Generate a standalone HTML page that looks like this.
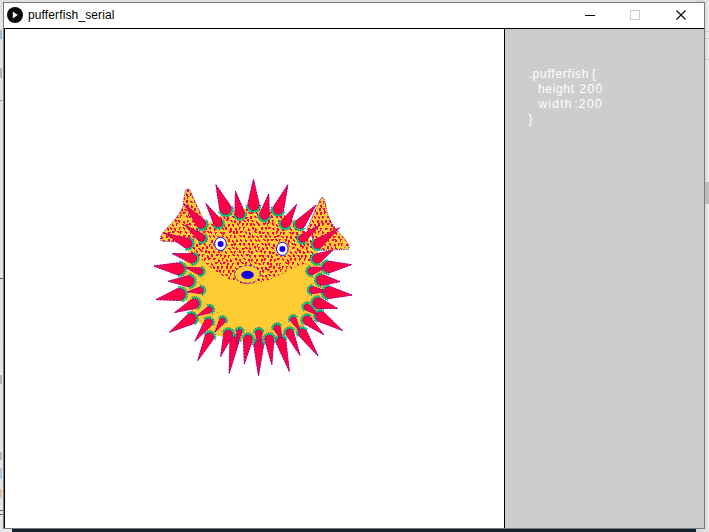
<!DOCTYPE html>
<html><head><meta charset="utf-8"><style>
html,body{margin:0;padding:0;}
body{width:709px;height:532px;overflow:hidden;position:relative;background:#e9e9e9;font-family:"Liberation Sans",sans-serif;}
.a{position:absolute;}
</style></head><body>
<div class="a" style="left:0;top:0;width:697px;height:2px;background:#dfdfdf"></div><div class="a" style="left:697px;top:0;width:12px;height:2px;background:linear-gradient(90deg,#cfcfcf,#ececec)"></div>
<div class="a" style="left:0;top:0;width:3px;height:532px;background:#e3e3e3"></div>
<div class="a" style="left:705px;top:0;width:4px;height:532px;background:linear-gradient(90deg,#d6d6d6,#e4e4e4 50%,#ececec)"></div>
<div class="a" style="left:12px;top:529px;width:684px;height:3px;background:#10202e"></div><div class="a" style="left:696px;top:529px;width:9px;height:3px;background:linear-gradient(90deg,#d2d2d2,#e2e2e2)"></div>
<div class="a" style="left:0;top:30px;width:2px;height:9px;background:#9fb6dc"></div>
<div class="a" style="left:0;top:68px;width:2px;height:10px;background:#b4b4b4"></div>
<div class="a" style="left:0;top:100px;width:2px;height:1px;background:#6d8fc4"></div>
<div class="a" style="left:0;top:278px;width:3px;height:1px;background:#4a5866"></div>
<div class="a" style="left:0;top:345px;width:3px;height:187px;background:#e6e6e6"></div>
<div class="a" style="left:0;top:375px;width:2px;height:9px;background:#b4b4b4"></div>
<div class="a" style="left:0;top:452px;width:2px;height:8px;background:#b4b4b4"></div>
<div class="a" style="left:0;top:468px;width:2px;height:11px;background:#b0c4e4"></div>
<div class="a" style="left:0;top:489px;width:2px;height:9px;background:#dcc4a4"></div>
<div class="a" style="left:0;top:510px;width:3px;height:1px;background:#606060"></div>
<div class="a" style="left:0;top:514px;width:3px;height:1px;background:#606060"></div>
<div class="a" style="left:705px;top:182px;width:4px;height:22px;background:#bdbdbd"></div>
<div class="a" style="left:705px;top:31px;width:4px;height:1px;background:#c4c4c4"></div>
<div class="a" style="left:705px;top:38px;width:4px;height:1px;background:#c4c4c4"></div>
<div class="a" style="left:705px;top:59px;width:4px;height:1px;background:#c4c4c4"></div>
<!-- window -->
<div class="a" style="left:3px;top:2px;width:700px;height:525px;border:1px solid #7a7a7a;background:#fff"></div>
<svg class="a" style="left:0;top:0" width="709" height="532" viewBox="0 0 709 532">
 <circle cx="15" cy="15" r="8" fill="#0a0a0a"/>
 <path d="M12.8,11.6 L17.8,15 L12.8,18.4 Z" fill="#f4f4f4"/>
 <rect x="585" y="15" width="10" height="1" fill="#000"/>
 <rect x="630.5" y="10.5" width="9" height="9" fill="none" stroke="#cccccc" stroke-width="1"/>
 <path d="M676.5,10.5 L685.5,19.5 M685.5,10.5 L676.5,19.5" stroke="#000" stroke-width="1.1"/>
</svg>
<svg class="a" style="left:0;top:0" width="709" height="40"><text x="28" y="18.8" font-size="12" fill="#000" textLength="86.5" lengthAdjust="spacing">pufferfish_serial</text></svg>
<div class="a" style="left:4px;top:28px;width:700px;height:500px;background:#fff"></div>
<div class="a" style="left:505px;top:29px;width:199px;height:499px;background:#cdcdcd"></div>
<div class="a" style="left:4px;top:28px;width:700px;height:1px;background:#000"></div>
<div class="a" style="left:4px;top:28px;width:1px;height:500px;background:#000"></div>
<div class="a" style="left:504px;top:28px;width:1px;height:500px;background:#000"></div>
<div class="a" style="left:704px;top:2px;width:1px;height:527px;background:#7a7a7a"></div>
<div class="a" style="left:3px;top:528px;width:702px;height:1px;background:#7a7a7a"></div>
<svg class="a" style="left:0;top:0" width="709" height="532" font-size="12" fill="#fff">
<text x="528.5" y="77.8" textLength="60" lengthAdjust="spacing">.pufferfish</text>
<text x="591.8" y="77.8">{</text>
<text x="538" y="92.7" textLength="36" lengthAdjust="spacing">height</text>
<text x="579.3" y="92.7" textLength="23" lengthAdjust="spacing">200</text>
<text x="538.4" y="107.5" textLength="33" lengthAdjust="spacing">width</text>
<text x="574.5" y="107.5">:</text>
<text x="578.8" y="107.5" textLength="23" lengthAdjust="spacing">200</text>
<text x="528.5" y="122.5">}</text>
</svg>
<svg class="a" style="left:0;top:0" width="709" height="532" viewBox="0 0 709 532">
<defs><clipPath id="dc"><path d="M150,150 L360,150 L360,244 C330,250 310,262 290,270 C275,278 262,284 248,284 C232,284 215,272 200,258 L150,240 Z"/></clipPath><clipPath id="bc"><path d="M185.8,190.5 C186.8,188.6 189,188.6 190,190.5 C192.5,195 195.5,204 201,214 L205,224 L190,245 L175,241.8 L161.5,241.3 C160,239.5 160.3,236 163,232.5 C171,224 180.5,214 183,206 C184,199 184.5,193 185.8,190.5 Z"/><path d="M322.8,197.5 C325,199 325.8,205 326.7,210 C328.7,219 333,226 339,232.5 C343,237 347,241 349.2,246 L348.7,249.3 L321,250.5 L307,230 C310.5,221 314.5,211 318.5,203.5 C320,200 321,197.5 322.8,197.5 Z"/><circle cx="254" cy="275" r="67"/></clipPath></defs>
<path d="M185.8,190.5 C186.8,188.6 189,188.6 190,190.5 C192.5,195 195.5,204 201,214 L205,224 L190,245 L175,241.8 L161.5,241.3 C160,239.5 160.3,236 163,232.5 C171,224 180.5,214 183,206 C184,199 184.5,193 185.8,190.5 Z" fill="#ffcc33" stroke="#1400e6" stroke-width="0.9" stroke-dasharray="1 1.2"/>
<path d="M322.8,197.5 C325,199 325.8,205 326.7,210 C328.7,219 333,226 339,232.5 C343,237 347,241 349.2,246 L348.7,249.3 L321,250.5 L307,230 C310.5,221 314.5,211 318.5,203.5 C320,200 321,197.5 322.8,197.5 Z" fill="#ffcc33" stroke="#1400e6" stroke-width="0.9" stroke-dasharray="1 1.2"/>
<circle cx="254" cy="275" r="67" fill="#ffcc33"/><path d="M182.4,276.4 L184.1,262.2 L189.0,251.0 L194.0,239.8 L200.1,231.0 L209.2,223.1 L220.8,215.5 L233.8,210.4 L246.8,209.2 L260.3,209.2 L270.7,210.9 L282.8,215.6 L292.6,223.1 L301.9,231.0 L310.1,241.0 L317.3,250.7 L323.3,260.7 L324.7,274.3 L325.3,284.4 L323.7,298.5 L320.0,308.6 L313.1,319.4 L304.3,326.4 L294.9,332.7 L285.2,335.9 L273.6,339.1 L264.3,340.8 L252.5,340.8 L217.2,335.8 L207.1,330.8 L198.3,321.8 L191.3,310.6 L185.8,300.1 L182.7,286.2 Z" fill="#ffcc33"/>
<g clip-path="url(#dc)"><g clip-path="url(#bc)"><path d="M155,184h2v3h-2zM159,185h2v2h-2zM159,187h1v1h-1zM164,186h2v1h-2zM165,187h2v1h-2zM167,185h2v2h-2zM168,187h1v1h-1zM172,185h2v3h-2zM177,184h2v1h-2zM178,185h2v1h-2zM181,185h2v3h-2zM185,185h2v1h-2zM186,186h2v1h-2zM189,186h1v2h-1zM190,187h1v2h-1zM194,185h1v2h-1zM195,186h1v2h-1zM198,185h2v2h-2zM199,187h1v1h-1zM202,185h2v2h-2zM202,187h1v1h-1zM206,185h2v3h-2zM211,185h1v3h-1zM212,185h1v1h-1zM216,185h3v1h-3zM216,186h2v1h-2zM219,185h1v3h-1zM220,186h1v2h-1zM224,185h1v2h-1zM225,186h1v2h-1zM228,186h3v1h-3zM228,187h2v1h-2zM232,186h2v2h-2zM233,188h1v1h-1zM237,184h2v2h-2zM237,186h1v1h-1zM240,185h2v3h-2zM246,184h2v2h-2zM246,186h1v1h-1zM249,185h3v1h-3zM249,186h2v1h-2zM254,185h2v2h-2zM255,187h1v1h-1zM259,185h2v2h-2zM260,187h1v1h-1zM262,185h3v1h-3zM262,186h2v1h-2zM266,185h2v2h-2zM266,187h1v1h-1zM270,185h1v3h-1zM271,186h1v2h-1zM276,185h2v1h-2zM277,186h2v1h-2zM280,184h2v1h-2zM281,185h2v1h-2zM284,186h3v1h-3zM284,187h2v1h-2zM288,185h1v2h-1zM289,186h1v2h-1zM293,186h1v2h-1zM294,187h1v2h-1zM297,186h1v3h-1zM298,186h1v1h-1zM302,184h1v3h-1zM303,185h1v2h-1zM305,185h2v3h-2zM310,185h1v2h-1zM311,186h1v2h-1zM314,184h2v2h-2zM314,186h1v1h-1zM319,185h1v3h-1zM320,186h1v2h-1zM323,185h2v3h-2zM327,186h1v3h-1zM328,186h1v1h-1zM331,185h3v1h-3zM331,186h2v1h-2zM336,184h2v2h-2zM337,186h1v1h-1zM341,185h2v2h-2zM342,187h1v1h-1zM344,184h2v3h-2zM349,185h2v2h-2zM349,187h1v1h-1zM353,184h2v1h-2zM354,185h2v1h-2zM157,188h1v2h-1zM158,189h1v2h-1zM162,189h3v1h-3zM162,190h2v1h-2zM165,189h3v1h-3zM165,190h2v1h-2zM170,189h1v3h-1zM171,190h1v2h-1zM174,189h1v2h-1zM175,190h1v2h-1zM179,189h2v3h-2zM182,190h2v2h-2zM182,192h1v1h-1zM187,189h2v3h-2zM192,189h2v2h-2zM193,191h1v1h-1zM196,188h2v2h-2zM196,190h1v1h-1zM201,189h2v1h-2zM202,190h2v1h-2zM205,189h2v2h-2zM205,191h1v1h-1zM209,189h2v1h-2zM210,190h2v1h-2zM214,189h2v1h-2zM215,190h2v1h-2zM217,189h2v3h-2zM222,189h3v1h-3zM222,190h2v1h-2zM226,189h2v2h-2zM226,191h1v1h-1zM230,190h2v2h-2zM230,192h1v1h-1zM235,189h2v1h-2zM236,190h2v1h-2zM238,189h2v2h-2zM238,191h1v1h-1zM243,189h2v3h-2zM247,189h2v2h-2zM248,191h1v1h-1zM252,188h1v3h-1zM253,188h1v1h-1zM257,189h3v1h-3zM257,190h2v1h-2zM261,189h2v2h-2zM261,191h1v1h-1zM264,190h1v3h-1zM265,190h1v1h-1zM269,189h2v2h-2zM270,191h1v1h-1zM274,188h1v3h-1zM275,189h1v2h-1zM277,189h3v1h-3zM277,190h2v1h-2zM282,188h3v1h-3zM282,189h2v1h-2zM286,189h1v3h-1zM287,190h1v2h-1zM290,189h2v2h-2zM291,191h1v1h-1zM295,190h1v3h-1zM296,190h1v1h-1zM300,188h2v1h-2zM301,189h2v1h-2zM303,188h2v1h-2zM304,189h2v1h-2zM308,189h1v3h-1zM309,189h1v1h-1zM312,188h2v2h-2zM312,190h1v1h-1zM317,189h1v3h-1zM318,189h1v1h-1zM321,189h1v3h-1zM322,190h1v2h-1zM325,189h2v3h-2zM330,189h2v3h-2zM334,188h1v3h-1zM335,189h1v2h-1zM338,189h2v3h-2zM342,189h3v1h-3zM342,190h2v1h-2zM347,188h2v3h-2zM350,189h2v2h-2zM351,191h1v1h-1zM355,189h2v2h-2zM356,191h1v1h-1zM155,193h2v1h-2zM156,194h2v1h-2zM160,193h3v1h-3zM160,194h2v1h-2zM164,192h1v2h-1zM165,193h1v2h-1zM169,193h2v1h-2zM170,194h2v1h-2zM173,192h2v2h-2zM174,194h1v1h-1zM176,192h2v1h-2zM177,193h2v1h-2zM181,192h1v2h-1zM182,193h1v2h-1zM186,193h1v3h-1zM187,194h1v2h-1zM190,193h2v2h-2zM190,195h1v1h-1zM193,193h3v1h-3zM193,194h2v1h-2zM198,193h1v3h-1zM199,193h1v1h-1zM203,192h2v1h-2zM204,193h2v1h-2zM206,193h1v3h-1zM207,193h1v1h-1zM211,192h2v2h-2zM211,194h1v1h-1zM215,193h2v2h-2zM215,195h1v1h-1zM220,193h2v3h-2zM224,193h1v2h-1zM225,194h1v2h-1zM228,192h2v1h-2zM229,193h2v1h-2zM233,192h1v2h-1zM234,193h1v2h-1zM236,193h1v3h-1zM237,194h1v2h-1zM241,192h1v3h-1zM242,192h1v1h-1zM246,193h1v2h-1zM247,194h1v2h-1zM249,193h3v1h-3zM249,194h2v1h-2zM254,192h2v3h-2zM259,192h2v2h-2zM260,194h1v1h-1zM262,192h2v2h-2zM263,194h1v1h-1zM267,192h2v1h-2zM268,193h2v1h-2zM270,193h3v1h-3zM270,194h2v1h-2zM275,194h1v3h-1zM276,194h1v1h-1zM280,192h1v3h-1zM281,193h1v2h-1zM283,193h2v2h-2zM284,195h1v1h-1zM289,192h1v3h-1zM290,193h1v2h-1zM292,192h1v2h-1zM293,193h1v2h-1zM297,192h3v1h-3zM297,193h2v1h-2zM301,192h2v2h-2zM301,194h1v1h-1zM306,194h2v3h-2zM309,193h2v1h-2zM310,194h2v1h-2zM314,192h3v1h-3zM314,193h2v1h-2zM318,193h1v3h-1zM319,193h1v1h-1zM323,193h1v3h-1zM324,193h1v1h-1zM328,192h2v1h-2zM329,193h2v1h-2zM332,192h1v3h-1zM333,193h1v2h-1zM335,192h2v3h-2zM340,192h1v2h-1zM341,193h1v2h-1zM344,192h1v3h-1zM345,192h1v1h-1zM349,193h1v2h-1zM350,194h1v2h-1zM353,193h2v3h-2zM157,196h3v1h-3zM157,197h2v1h-2zM161,196h2v2h-2zM161,198h1v1h-1zM167,197h2v1h-2zM168,198h2v1h-2zM169,197h2v1h-2zM170,198h2v1h-2zM174,196h1v3h-1zM175,196h1v1h-1zM178,196h2v1h-2zM179,197h2v1h-2zM183,197h2v2h-2zM184,199h1v1h-1zM187,196h1v3h-1zM188,196h1v1h-1zM192,196h1v2h-1zM193,197h1v2h-1zM196,196h1v3h-1zM197,197h1v2h-1zM200,197h1v3h-1zM201,197h1v1h-1zM205,197h3v1h-3zM205,198h2v1h-2zM208,197h1v3h-1zM209,198h1v2h-1zM212,197h1v3h-1zM213,197h1v1h-1zM218,197h1v3h-1zM219,198h1v2h-1zM222,197h2v3h-2zM226,197h2v1h-2zM227,198h2v1h-2zM230,196h2v2h-2zM230,198h1v1h-1zM235,196h3v1h-3zM235,197h2v1h-2zM239,197h2v1h-2zM240,198h2v1h-2zM243,196h2v2h-2zM244,198h1v1h-1zM248,197h2v2h-2zM249,199h1v1h-1zM252,196h3v1h-3zM252,197h2v1h-2zM256,196h1v2h-1zM257,197h1v2h-1zM260,197h2v1h-2zM261,198h2v1h-2zM265,197h3v1h-3zM265,198h2v1h-2zM270,196h1v2h-1zM271,197h1v2h-1zM274,197h2v1h-2zM275,198h2v1h-2zM277,196h1v2h-1zM278,197h1v2h-1zM282,197h1v3h-1zM283,198h1v2h-1zM285,196h1v2h-1zM286,197h1v2h-1zM291,196h2v1h-2zM292,197h2v1h-2zM295,196h1v2h-1zM296,197h1v2h-1zM299,197h2v2h-2zM300,199h1v1h-1zM304,197h1v2h-1zM305,198h1v2h-1zM308,197h2v3h-2zM312,196h3v1h-3zM312,197h2v1h-2zM317,196h2v1h-2zM318,197h2v1h-2zM320,196h1v2h-1zM321,197h1v2h-1zM326,196h1v2h-1zM327,197h1v2h-1zM330,197h2v1h-2zM331,198h2v1h-2zM333,197h1v3h-1zM334,197h1v1h-1zM337,196h3v1h-3zM337,197h2v1h-2zM342,196h1v3h-1zM343,197h1v2h-1zM346,196h2v2h-2zM347,198h1v1h-1zM351,196h2v2h-2zM351,198h1v1h-1zM355,196h2v1h-2zM356,197h2v1h-2zM155,201h1v2h-1zM156,202h1v2h-1zM159,200h1v3h-1zM160,200h1v1h-1zM164,201h2v2h-2zM164,203h1v1h-1zM169,201h2v3h-2zM172,200h1v2h-1zM173,201h1v2h-1zM177,200h1v2h-1zM178,201h1v2h-1zM181,200h2v2h-2zM181,202h1v1h-1zM186,200h2v3h-2zM190,201h2v1h-2zM191,202h2v1h-2zM194,200h1v3h-1zM195,200h1v1h-1zM198,201h1v2h-1zM199,202h1v2h-1zM202,201h1v3h-1zM203,202h1v2h-1zM206,200h1v2h-1zM207,201h1v2h-1zM211,201h1v2h-1zM212,202h1v2h-1zM215,200h3v1h-3zM215,201h2v1h-2zM220,200h1v3h-1zM221,201h1v2h-1zM224,200h3v1h-3zM224,201h2v1h-2zM228,200h2v2h-2zM228,202h1v1h-1zM233,200h1v3h-1zM234,201h1v2h-1zM237,200h1v3h-1zM238,201h1v2h-1zM241,200h2v1h-2zM242,201h2v1h-2zM245,201h2v1h-2zM246,202h2v1h-2zM250,201h1v3h-1zM251,201h1v1h-1zM254,201h2v1h-2zM255,202h2v1h-2zM258,200h2v3h-2zM262,201h2v2h-2zM262,203h1v1h-1zM266,200h2v1h-2zM267,201h2v1h-2zM270,201h1v3h-1zM271,201h1v1h-1zM275,200h1v2h-1zM276,201h1v2h-1zM280,201h2v3h-2zM283,200h3v1h-3zM283,201h2v1h-2zM289,200h2v2h-2zM290,202h1v1h-1zM292,201h3v1h-3zM292,202h2v1h-2zM298,200h2v2h-2zM299,202h1v1h-1zM301,200h2v2h-2zM302,202h1v1h-1zM306,201h3v1h-3zM306,202h2v1h-2zM309,201h2v3h-2zM315,200h2v3h-2zM319,200h1v3h-1zM320,201h1v2h-1zM323,201h1v3h-1zM324,201h1v1h-1zM327,200h2v2h-2zM328,202h1v1h-1zM331,201h2v1h-2zM332,202h2v1h-2zM335,200h2v3h-2zM339,200h3v1h-3zM339,201h2v1h-2zM344,200h2v1h-2zM345,201h2v1h-2zM348,200h2v1h-2zM349,201h2v1h-2zM352,200h1v2h-1zM353,201h1v2h-1zM156,204h1v3h-1zM157,204h1v1h-1zM161,204h1v3h-1zM162,204h1v1h-1zM166,204h2v3h-2zM170,205h2v2h-2zM170,207h1v1h-1zM175,204h1v2h-1zM176,205h1v2h-1zM179,204h2v1h-2zM180,205h2v1h-2zM183,204h2v1h-2zM184,205h2v1h-2zM187,204h1v2h-1zM188,205h1v2h-1zM191,205h1v3h-1zM192,206h1v2h-1zM196,204h2v3h-2zM201,204h1v3h-1zM202,204h1v1h-1zM204,204h1v3h-1zM205,205h1v2h-1zM209,205h1v3h-1zM210,206h1v2h-1zM213,205h2v2h-2zM213,207h1v1h-1zM218,205h1v3h-1zM219,206h1v2h-1zM221,204h3v1h-3zM221,205h2v1h-2zM225,205h1v3h-1zM226,205h1v1h-1zM231,205h3v1h-3zM231,206h2v1h-2zM234,204h1v2h-1zM235,205h1v2h-1zM238,204h2v2h-2zM239,206h1v1h-1zM243,205h1v3h-1zM244,205h1v1h-1zM247,205h1v3h-1zM248,205h1v1h-1zM251,205h2v1h-2zM252,206h2v1h-2zM256,205h2v1h-2zM257,206h2v1h-2zM260,205h3v1h-3zM260,206h2v1h-2zM264,204h1v3h-1zM265,204h1v1h-1zM268,204h2v2h-2zM269,206h1v1h-1zM274,204h2v1h-2zM275,205h2v1h-2zM278,205h2v2h-2zM278,207h1v1h-1zM282,204h2v3h-2zM286,205h2v2h-2zM286,207h1v1h-1zM291,204h2v2h-2zM292,206h1v1h-1zM294,204h3v1h-3zM294,205h2v1h-2zM299,204h1v3h-1zM300,204h1v1h-1zM304,205h3v1h-3zM304,206h2v1h-2zM307,204h2v3h-2zM312,205h1v3h-1zM313,206h1v2h-1zM316,204h2v2h-2zM316,206h1v1h-1zM320,205h2v2h-2zM321,207h1v1h-1zM325,204h1v3h-1zM326,205h1v2h-1zM329,204h2v3h-2zM333,204h1v3h-1zM334,205h1v2h-1zM339,205h2v2h-2zM340,207h1v1h-1zM342,204h2v2h-2zM343,206h1v1h-1zM346,205h3v1h-3zM346,206h2v1h-2zM350,204h3v1h-3zM350,205h2v1h-2zM355,205h2v2h-2zM356,207h1v1h-1zM155,208h1v2h-1zM156,209h1v2h-1zM159,208h1v2h-1zM160,209h1v2h-1zM163,208h2v1h-2zM164,209h2v1h-2zM167,208h2v1h-2zM168,209h2v1h-2zM172,208h2v1h-2zM173,209h2v1h-2zM177,208h2v2h-2zM178,210h1v1h-1zM181,209h2v2h-2zM182,211h1v1h-1zM184,209h2v1h-2zM185,210h2v1h-2zM190,209h2v3h-2zM194,208h2v3h-2zM198,209h2v1h-2zM199,210h2v1h-2zM203,208h1v3h-1zM204,209h1v2h-1zM207,208h2v3h-2zM210,208h2v2h-2zM210,210h1v1h-1zM215,208h1v3h-1zM216,209h1v2h-1zM219,209h2v3h-2zM224,208h2v1h-2zM225,209h2v1h-2zM229,209h1v3h-1zM230,209h1v1h-1zM233,208h1v2h-1zM234,209h1v2h-1zM236,207h3v1h-3zM236,208h2v1h-2zM241,208h2v2h-2zM242,210h1v1h-1zM246,208h1v3h-1zM247,209h1v2h-1zM250,208h1v3h-1zM251,209h1v2h-1zM254,208h1v2h-1zM255,209h1v2h-1zM258,208h2v3h-2zM262,208h2v2h-2zM262,210h1v1h-1zM267,207h2v2h-2zM267,209h1v1h-1zM271,208h1v3h-1zM272,208h1v1h-1zM275,207h1v3h-1zM276,208h1v2h-1zM280,209h1v3h-1zM281,209h1v1h-1zM284,208h1v3h-1zM285,209h1v2h-1zM288,208h1v3h-1zM289,209h1v2h-1zM293,209h2v2h-2zM294,211h1v1h-1zM297,209h1v3h-1zM298,210h1v2h-1zM301,208h1v3h-1zM302,209h1v2h-1zM306,208h3v1h-3zM306,209h2v1h-2zM310,209h2v1h-2zM311,210h2v1h-2zM314,209h2v3h-2zM319,208h2v3h-2zM323,208h2v2h-2zM324,210h1v1h-1zM328,208h1v3h-1zM329,209h1v2h-1zM332,209h1v3h-1zM333,209h1v1h-1zM336,208h3v1h-3zM336,209h2v1h-2zM339,208h1v3h-1zM340,208h1v1h-1zM345,208h2v2h-2zM345,210h1v1h-1zM348,208h2v1h-2zM349,209h2v1h-2zM352,208h2v3h-2zM157,212h1v3h-1zM158,212h1v1h-1zM162,212h1v2h-1zM163,213h1v2h-1zM166,212h2v1h-2zM167,213h2v1h-2zM170,212h3v1h-3zM170,213h2v1h-2zM174,212h2v3h-2zM179,212h2v1h-2zM180,213h2v1h-2zM183,212h3v1h-3zM183,213h2v1h-2zM188,213h1v3h-1zM189,213h1v1h-1zM191,211h1v3h-1zM192,211h1v1h-1zM196,213h2v3h-2zM199,211h2v2h-2zM199,213h1v1h-1zM205,212h2v3h-2zM209,213h1v3h-1zM210,214h1v2h-1zM212,211h2v2h-2zM213,213h1v1h-1zM217,213h3v1h-3zM217,214h2v1h-2zM221,213h1v3h-1zM222,214h1v2h-1zM226,212h2v1h-2zM227,213h2v1h-2zM230,212h1v2h-1zM231,213h1v2h-1zM234,213h1v2h-1zM235,214h1v2h-1zM239,212h1v2h-1zM240,213h1v2h-1zM243,213h2v1h-2zM244,214h2v1h-2zM248,212h2v1h-2zM249,213h2v1h-2zM251,211h1v3h-1zM252,212h1v2h-1zM256,212h1v2h-1zM257,213h1v2h-1zM261,213h1v3h-1zM262,214h1v2h-1zM265,212h2v3h-2zM269,212h3v1h-3zM269,213h2v1h-2zM273,212h2v2h-2zM274,214h1v1h-1zM277,212h1v3h-1zM278,212h1v1h-1zM282,212h1v3h-1zM283,212h1v1h-1zM287,212h2v2h-2zM287,214h1v1h-1zM290,211h2v1h-2zM291,212h2v1h-2zM294,212h2v3h-2zM299,212h1v2h-1zM300,213h1v2h-1zM304,213h2v2h-2zM304,215h1v1h-1zM308,212h2v1h-2zM309,213h2v1h-2zM311,212h1v3h-1zM312,212h1v1h-1zM316,212h2v3h-2zM320,212h2v3h-2zM324,211h2v2h-2zM324,213h1v1h-1zM329,212h2v1h-2zM330,213h2v1h-2zM333,212h1v3h-1zM334,213h1v2h-1zM337,212h3v1h-3zM337,213h2v1h-2zM342,211h2v1h-2zM343,212h2v1h-2zM347,212h2v2h-2zM348,214h1v1h-1zM351,213h1v2h-1zM352,214h1v2h-1zM355,212h2v3h-2zM154,216h2v2h-2zM154,218h1v1h-1zM159,216h3v1h-3zM159,217h2v1h-2zM163,217h2v3h-2zM167,215h1v3h-1zM168,216h1v2h-1zM172,215h2v2h-2zM173,217h1v1h-1zM176,216h2v1h-2zM177,217h2v1h-2zM180,215h1v3h-1zM181,215h1v1h-1zM186,215h1v2h-1zM187,216h1v2h-1zM189,216h3v1h-3zM189,217h2v1h-2zM194,215h1v3h-1zM195,215h1v1h-1zM198,216h3v1h-3zM198,217h2v1h-2zM202,217h1v2h-1zM203,218h1v2h-1zM206,215h2v2h-2zM206,217h1v1h-1zM212,217h1v2h-1zM213,218h1v2h-1zM216,216h1v3h-1zM217,216h1v1h-1zM220,217h1v2h-1zM221,218h1v2h-1zM223,217h2v1h-2zM224,218h2v1h-2zM227,216h1v3h-1zM228,217h1v2h-1zM232,216h2v1h-2zM233,217h2v1h-2zM237,216h2v2h-2zM237,218h1v1h-1zM241,216h2v1h-2zM242,217h2v1h-2zM245,217h3v1h-3zM245,218h2v1h-2zM250,216h2v3h-2zM254,216h2v1h-2zM255,217h2v1h-2zM258,216h2v1h-2zM259,217h2v1h-2zM262,216h1v3h-1zM263,217h1v2h-1zM266,215h2v2h-2zM267,217h1v1h-1zM271,215h1v3h-1zM272,216h1v2h-1zM276,215h1v3h-1zM277,216h1v2h-1zM280,216h2v2h-2zM281,218h1v1h-1zM284,215h2v2h-2zM284,217h1v1h-1zM288,217h2v2h-2zM289,219h1v1h-1zM293,216h1v3h-1zM294,216h1v1h-1zM296,215h2v2h-2zM297,217h1v1h-1zM300,217h2v2h-2zM301,219h1v1h-1zM306,216h1v2h-1zM307,217h1v2h-1zM310,215h2v1h-2zM311,216h2v1h-2zM314,216h1v2h-1zM315,217h1v2h-1zM318,216h1v2h-1zM319,217h1v2h-1zM322,216h2v2h-2zM322,218h1v1h-1zM327,216h3v1h-3zM327,217h2v1h-2zM332,216h2v3h-2zM336,215h2v2h-2zM337,217h1v1h-1zM340,216h2v1h-2zM341,217h2v1h-2zM345,216h1v2h-1zM346,217h1v2h-1zM348,215h2v1h-2zM349,216h2v1h-2zM352,216h2v3h-2zM156,220h3v1h-3zM156,221h2v1h-2zM162,220h3v1h-3zM162,221h2v1h-2zM166,221h1v2h-1zM167,222h1v2h-1zM170,219h2v1h-2zM171,220h2v1h-2zM175,219h1v3h-1zM176,220h1v2h-1zM178,220h2v2h-2zM179,222h1v1h-1zM183,221h2v2h-2zM184,223h1v1h-1zM187,220h1v3h-1zM188,220h1v1h-1zM192,220h2v2h-2zM193,222h1v1h-1zM196,220h2v2h-2zM196,222h1v1h-1zM200,219h1v3h-1zM201,220h1v2h-1zM204,220h2v1h-2zM205,221h2v1h-2zM209,219h2v3h-2zM213,220h1v3h-1zM214,221h1v2h-1zM218,220h2v2h-2zM218,222h1v1h-1zM221,220h1v2h-1zM222,221h1v2h-1zM226,219h3v1h-3zM226,220h2v1h-2zM230,220h2v1h-2zM231,221h2v1h-2zM234,220h1v3h-1zM235,221h1v2h-1zM239,221h2v2h-2zM239,223h1v1h-1zM243,220h2v1h-2zM244,221h2v1h-2zM247,219h2v2h-2zM248,221h1v1h-1zM251,220h2v1h-2zM252,221h2v1h-2zM256,221h1v2h-1zM257,222h1v2h-1zM261,220h2v1h-2zM262,221h2v1h-2zM264,220h1v2h-1zM265,221h1v2h-1zM268,220h2v3h-2zM272,220h1v3h-1zM273,220h1v1h-1zM278,220h1v2h-1zM279,221h1v2h-1zM282,219h1v3h-1zM283,219h1v1h-1zM285,219h1v3h-1zM286,219h1v1h-1zM291,220h1v3h-1zM292,220h1v1h-1zM295,220h2v1h-2zM296,221h2v1h-2zM299,220h3v1h-3zM299,221h2v1h-2zM303,219h2v2h-2zM304,221h1v1h-1zM308,219h1v3h-1zM309,219h1v1h-1zM312,220h1v2h-1zM313,221h1v2h-1zM317,220h2v3h-2zM321,220h1v3h-1zM322,221h1v2h-1zM325,220h2v3h-2zM329,220h2v2h-2zM330,222h1v1h-1zM333,220h1v3h-1zM334,221h1v2h-1zM338,221h2v1h-2zM339,222h2v1h-2zM342,219h3v1h-3zM342,220h2v1h-2zM346,220h2v3h-2zM351,220h2v2h-2zM351,222h1v1h-1zM355,221h2v1h-2zM356,222h2v1h-2zM156,223h2v2h-2zM157,225h1v1h-1zM160,224h2v3h-2zM163,224h2v3h-2zM167,224h1v3h-1zM168,224h1v1h-1zM172,224h1v2h-1zM173,225h1v2h-1zM176,223h1v3h-1zM177,223h1v1h-1zM182,224h2v1h-2zM183,225h2v1h-2zM186,224h3v1h-3zM186,225h2v1h-2zM189,223h2v2h-2zM190,225h1v1h-1zM194,224h3v1h-3zM194,225h2v1h-2zM198,224h1v3h-1zM199,225h1v2h-1zM202,224h1v3h-1zM203,224h1v1h-1zM207,223h1v3h-1zM208,224h1v2h-1zM211,224h2v1h-2zM212,225h2v1h-2zM215,224h1v2h-1zM216,225h1v2h-1zM220,224h3v1h-3zM220,225h2v1h-2zM223,224h1v2h-1zM224,225h1v2h-1zM228,224h2v2h-2zM228,226h1v1h-1zM232,224h2v2h-2zM233,226h1v1h-1zM237,223h1v2h-1zM238,224h1v2h-1zM242,223h2v2h-2zM242,225h1v1h-1zM246,223h2v2h-2zM246,225h1v1h-1zM250,223h2v3h-2zM253,223h1v2h-1zM254,224h1v2h-1zM258,223h1v3h-1zM259,224h1v2h-1zM263,223h3v1h-3zM263,224h2v1h-2zM267,223h1v3h-1zM268,223h1v1h-1zM272,223h2v2h-2zM273,225h1v1h-1zM276,224h1v2h-1zM277,225h1v2h-1zM279,224h2v2h-2zM280,226h1v1h-1zM284,224h2v2h-2zM285,226h1v1h-1zM288,223h2v1h-2zM289,224h2v1h-2zM293,224h2v3h-2zM297,224h3v1h-3zM297,225h2v1h-2zM301,223h2v3h-2zM305,223h3v1h-3zM305,224h2v1h-2zM310,224h2v2h-2zM310,226h1v1h-1zM314,224h2v2h-2zM315,226h1v1h-1zM318,223h2v3h-2zM322,223h2v2h-2zM322,225h1v1h-1zM327,223h3v1h-3zM327,224h2v1h-2zM331,224h2v3h-2zM335,224h1v3h-1zM336,225h1v2h-1zM340,224h2v2h-2zM340,226h1v1h-1zM344,224h2v1h-2zM345,225h2v1h-2zM348,223h1v2h-1zM349,224h1v2h-1zM353,224h1v2h-1zM354,225h1v2h-1zM157,228h2v2h-2zM157,230h1v1h-1zM161,227h2v2h-2zM161,229h1v1h-1zM167,228h2v2h-2zM168,230h1v1h-1zM170,227h1v2h-1zM171,228h1v2h-1zM174,228h2v2h-2zM175,230h1v1h-1zM179,227h1v3h-1zM180,227h1v1h-1zM183,227h1v2h-1zM184,228h1v2h-1zM187,227h3v1h-3zM187,228h2v1h-2zM192,228h1v3h-1zM193,228h1v1h-1zM196,228h2v2h-2zM197,230h1v1h-1zM200,228h3v1h-3zM200,229h2v1h-2zM205,227h1v3h-1zM206,228h1v2h-1zM209,227h2v2h-2zM210,229h1v1h-1zM214,228h2v2h-2zM214,230h1v1h-1zM218,227h1v2h-1zM219,228h1v2h-1zM222,227h1v2h-1zM223,228h1v2h-1zM225,227h2v3h-2zM230,228h2v3h-2zM235,228h2v2h-2zM236,230h1v1h-1zM239,227h1v3h-1zM240,227h1v1h-1zM243,227h1v3h-1zM244,227h1v1h-1zM248,228h1v3h-1zM249,229h1v2h-1zM252,227h2v2h-2zM253,229h1v1h-1zM255,228h1v3h-1zM256,229h1v2h-1zM261,227h2v3h-2zM265,227h2v2h-2zM266,229h1v1h-1zM268,227h3v1h-3zM268,228h2v1h-2zM272,228h2v1h-2zM273,229h2v1h-2zM277,228h2v3h-2zM282,228h1v3h-1zM283,229h1v2h-1zM287,227h3v1h-3zM287,228h2v1h-2zM290,228h1v2h-1zM291,229h1v2h-1zM295,227h2v3h-2zM298,227h2v2h-2zM299,229h1v1h-1zM303,227h1v3h-1zM304,228h1v2h-1zM308,228h2v3h-2zM312,228h3v1h-3zM312,229h2v1h-2zM316,227h2v2h-2zM317,229h1v1h-1zM320,228h1v3h-1zM321,228h1v1h-1zM325,228h3v1h-3zM325,229h2v1h-2zM330,228h2v2h-2zM330,230h1v1h-1zM333,227h2v2h-2zM333,229h1v1h-1zM338,228h2v3h-2zM343,228h1v2h-1zM344,229h1v2h-1zM346,228h2v1h-2zM347,229h2v1h-2zM350,228h2v1h-2zM351,229h2v1h-2zM355,227h2v3h-2zM155,231h1v3h-1zM156,232h1v2h-1zM159,232h2v3h-2zM163,231h1v3h-1zM164,232h1v2h-1zM168,232h3v1h-3zM168,233h2v1h-2zM172,231h3v1h-3zM172,232h2v1h-2zM177,231h2v1h-2zM178,232h2v1h-2zM180,231h1v3h-1zM181,231h1v1h-1zM185,231h1v2h-1zM186,232h1v2h-1zM190,231h1v3h-1zM191,231h1v1h-1zM194,231h2v2h-2zM194,233h1v1h-1zM198,231h1v2h-1zM199,232h1v2h-1zM203,231h3v1h-3zM203,232h2v1h-2zM207,231h2v1h-2zM208,232h2v1h-2zM210,231h1v2h-1zM211,232h1v2h-1zM215,232h1v3h-1zM216,232h1v1h-1zM220,232h2v1h-2zM221,233h2v1h-2zM223,232h2v2h-2zM223,234h1v1h-1zM229,231h3v1h-3zM229,232h2v1h-2zM233,231h2v3h-2zM236,231h2v3h-2zM240,231h3v1h-3zM240,232h2v1h-2zM245,231h1v2h-1zM246,232h1v2h-1zM249,232h1v3h-1zM250,233h1v2h-1zM254,231h2v1h-2zM255,232h2v1h-2zM259,231h2v3h-2zM262,232h3v1h-3zM262,233h2v1h-2zM267,232h2v2h-2zM268,234h1v1h-1zM272,232h2v2h-2zM273,234h1v1h-1zM276,231h2v2h-2zM276,233h1v1h-1zM280,232h1v3h-1zM281,232h1v1h-1zM283,232h2v2h-2zM283,234h1v1h-1zM289,232h2v1h-2zM290,233h2v1h-2zM292,232h2v2h-2zM292,234h1v1h-1zM296,232h2v3h-2zM302,231h3v1h-3zM302,232h2v1h-2zM305,231h2v3h-2zM311,232h1v2h-1zM312,233h1v2h-1zM314,231h2v2h-2zM315,233h1v1h-1zM318,231h1v3h-1zM319,231h1v1h-1zM322,231h1v3h-1zM323,232h1v2h-1zM327,232h2v3h-2zM331,232h2v3h-2zM335,232h2v2h-2zM336,234h1v1h-1zM341,232h1v3h-1zM342,233h1v2h-1zM345,232h1v3h-1zM346,232h1v1h-1zM349,232h3v1h-3zM349,233h2v1h-2zM354,231h2v1h-2zM355,232h2v1h-2zM157,236h1v3h-1zM158,237h1v2h-1zM161,236h1v3h-1zM162,237h1v2h-1zM166,235h1v3h-1zM167,236h1v2h-1zM170,235h1v3h-1zM171,235h1v1h-1zM174,235h1v2h-1zM175,236h1v2h-1zM179,235h1v3h-1zM180,236h1v2h-1zM183,235h3v1h-3zM183,236h2v1h-2zM188,235h2v3h-2zM192,236h2v1h-2zM193,237h2v1h-2zM196,236h2v2h-2zM197,238h1v1h-1zM200,235h2v2h-2zM200,237h1v1h-1zM204,235h2v1h-2zM205,236h2v1h-2zM209,235h1v2h-1zM210,236h1v2h-1zM213,235h1v2h-1zM214,236h1v2h-1zM217,236h3v1h-3zM217,237h2v1h-2zM222,235h1v3h-1zM223,236h1v2h-1zM226,236h1v2h-1zM227,237h1v2h-1zM230,235h1v3h-1zM231,235h1v1h-1zM234,235h1v3h-1zM235,236h1v2h-1zM239,235h2v1h-2zM240,236h2v1h-2zM243,235h2v2h-2zM244,237h1v1h-1zM248,236h3v1h-3zM248,237h2v1h-2zM252,235h1v3h-1zM253,236h1v2h-1zM256,236h2v1h-2zM257,237h2v1h-2zM260,235h2v2h-2zM261,237h1v1h-1zM265,235h2v3h-2zM269,235h1v2h-1zM270,236h1v2h-1zM274,236h3v1h-3zM274,237h2v1h-2zM277,235h3v1h-3zM277,236h2v1h-2zM281,236h2v1h-2zM282,237h2v1h-2zM286,236h2v2h-2zM286,238h1v1h-1zM290,236h2v3h-2zM295,236h2v2h-2zM296,238h1v1h-1zM298,236h2v2h-2zM298,238h1v1h-1zM304,236h2v3h-2zM307,235h3v1h-3zM307,236h2v1h-2zM312,235h1v3h-1zM313,236h1v2h-1zM315,236h2v1h-2zM316,237h2v1h-2zM321,235h1v2h-1zM322,236h1v2h-1zM324,236h2v3h-2zM328,236h2v1h-2zM329,237h2v1h-2zM333,236h3v1h-3zM333,237h2v1h-2zM338,236h2v2h-2zM339,238h1v1h-1zM342,235h1v3h-1zM343,236h1v2h-1zM346,235h3v1h-3zM346,236h2v1h-2zM351,236h2v2h-2zM352,238h1v1h-1zM354,235h1v3h-1zM355,236h1v2h-1zM155,239h2v1h-2zM156,240h2v1h-2zM159,239h1v3h-1zM160,239h1v1h-1zM163,240h1v3h-1zM164,240h1v1h-1zM168,239h2v3h-2zM172,240h2v2h-2zM172,242h1v1h-1zM176,239h2v2h-2zM176,241h1v1h-1zM181,240h2v2h-2zM181,242h1v1h-1zM186,240h2v3h-2zM189,239h2v2h-2zM189,241h1v1h-1zM193,239h2v3h-2zM198,239h2v2h-2zM199,241h1v1h-1zM202,239h2v3h-2zM206,239h1v3h-1zM207,239h1v1h-1zM211,240h2v3h-2zM216,240h2v3h-2zM219,239h1v2h-1zM220,240h1v2h-1zM224,239h2v3h-2zM228,239h2v3h-2zM232,240h1v2h-1zM233,241h1v2h-1zM236,239h1v3h-1zM237,240h1v2h-1zM240,239h1v2h-1zM241,240h1v2h-1zM245,239h1v3h-1zM246,240h1v2h-1zM250,239h1v2h-1zM251,240h1v2h-1zM255,239h1v2h-1zM256,240h1v2h-1zM258,239h1v2h-1zM259,240h1v2h-1zM263,239h2v1h-2zM264,240h2v1h-2zM267,239h2v2h-2zM267,241h1v1h-1zM271,239h3v1h-3zM271,240h2v1h-2zM275,239h2v1h-2zM276,240h2v1h-2zM279,239h1v3h-1zM280,239h1v1h-1zM285,239h2v2h-2zM285,241h1v1h-1zM288,240h2v2h-2zM288,242h1v1h-1zM293,239h1v2h-1zM294,240h1v2h-1zM298,239h2v3h-2zM302,239h2v2h-2zM303,241h1v1h-1zM306,239h2v3h-2zM310,240h2v2h-2zM310,242h1v1h-1zM314,239h2v1h-2zM315,240h2v1h-2zM319,239h1v3h-1zM320,240h1v2h-1zM323,239h1v3h-1zM324,240h1v2h-1zM327,239h1v2h-1zM328,240h1v2h-1zM332,239h3v1h-3zM332,240h2v1h-2zM335,239h1v3h-1zM336,240h1v2h-1zM340,239h1v3h-1zM341,239h1v1h-1zM345,239h3v1h-3zM345,240h2v1h-2zM348,240h1v3h-1zM349,241h1v2h-1zM353,240h2v2h-2zM354,242h1v1h-1zM157,243h3v1h-3zM157,244h2v1h-2zM161,243h2v2h-2zM161,245h1v1h-1zM166,243h1v3h-1zM167,243h1v1h-1zM170,242h3v1h-3zM170,243h2v1h-2zM174,243h1v2h-1zM175,244h1v2h-1zM179,243h1v3h-1zM180,243h1v1h-1zM183,242h2v2h-2zM183,244h1v1h-1zM187,244h2v1h-2zM188,245h2v1h-2zM192,243h1v3h-1zM193,243h1v1h-1zM196,244h2v3h-2zM199,243h3v1h-3zM199,244h2v1h-2zM204,243h1v2h-1zM205,244h1v2h-1zM209,244h1v3h-1zM210,244h1v1h-1zM213,243h2v2h-2zM213,245h1v1h-1zM217,242h2v2h-2zM218,244h1v1h-1zM222,242h2v2h-2zM222,244h1v1h-1zM226,243h1v3h-1zM227,244h1v2h-1zM231,244h3v1h-3zM231,245h2v1h-2zM234,243h2v2h-2zM234,245h1v1h-1zM239,243h2v2h-2zM240,245h1v1h-1zM243,243h2v2h-2zM244,245h1v1h-1zM248,243h2v2h-2zM249,245h1v1h-1zM252,243h2v2h-2zM252,245h1v1h-1zM257,244h1v3h-1zM258,244h1v1h-1zM261,243h2v1h-2zM262,244h2v1h-2zM265,243h1v3h-1zM266,244h1v2h-1zM268,243h2v2h-2zM269,245h1v1h-1zM273,244h2v3h-2zM278,242h2v3h-2zM282,243h2v3h-2zM287,243h2v2h-2zM288,245h1v1h-1zM291,243h2v1h-2zM292,244h2v1h-2zM294,243h1v2h-1zM295,244h1v2h-1zM300,244h1v3h-1zM301,245h1v2h-1zM303,243h2v2h-2zM304,245h1v1h-1zM307,243h2v2h-2zM308,245h1v1h-1zM311,242h3v1h-3zM311,243h2v1h-2zM317,243h2v3h-2zM321,243h2v2h-2zM321,245h1v1h-1zM324,243h1v2h-1zM325,244h1v2h-1zM329,243h2v2h-2zM330,245h1v1h-1zM334,244h2v2h-2zM335,246h1v1h-1zM338,243h1v3h-1zM339,243h1v1h-1zM341,243h1v3h-1zM342,243h1v1h-1zM346,244h3v1h-3zM346,245h2v1h-2zM350,243h2v1h-2zM351,244h2v1h-2zM354,244h1v3h-1zM355,245h1v2h-1zM155,248h3v1h-3zM155,249h2v1h-2zM159,247h3v1h-3zM159,248h2v1h-2zM164,246h1v3h-1zM165,246h1v1h-1zM168,247h1v3h-1zM169,247h1v1h-1zM172,248h3v1h-3zM172,249h2v1h-2zM176,248h2v2h-2zM177,250h1v1h-1zM180,247h1v3h-1zM181,248h1v2h-1zM184,248h1v3h-1zM185,248h1v1h-1zM189,246h1v3h-1zM190,246h1v1h-1zM193,247h2v2h-2zM194,249h1v1h-1zM198,248h2v1h-2zM199,249h2v1h-2zM202,247h2v2h-2zM202,249h1v1h-1zM206,246h2v3h-2zM211,246h1v3h-1zM212,247h1v2h-1zM215,247h1v3h-1zM216,248h1v2h-1zM220,247h2v1h-2zM221,248h2v1h-2zM223,247h1v3h-1zM224,247h1v1h-1zM228,248h2v1h-2zM229,249h2v1h-2zM232,247h2v1h-2zM233,248h2v1h-2zM236,247h1v3h-1zM237,248h1v2h-1zM242,248h3v1h-3zM242,249h2v1h-2zM245,247h2v1h-2zM246,248h2v1h-2zM249,247h1v3h-1zM250,248h1v2h-1zM254,246h2v2h-2zM255,248h1v1h-1zM258,247h1v3h-1zM259,247h1v1h-1zM262,247h1v3h-1zM263,248h1v2h-1zM266,247h2v2h-2zM267,249h1v1h-1zM271,247h2v1h-2zM272,248h2v1h-2zM275,247h2v2h-2zM276,249h1v1h-1zM279,248h1v2h-1zM280,249h1v2h-1zM284,247h2v2h-2zM285,249h1v1h-1zM288,246h1v3h-1zM289,246h1v1h-1zM292,247h3v1h-3zM292,248h2v1h-2zM297,248h1v3h-1zM298,249h1v2h-1zM302,246h2v2h-2zM302,248h1v1h-1zM306,247h2v2h-2zM306,249h1v1h-1zM310,246h3v1h-3zM310,247h2v1h-2zM314,247h2v2h-2zM314,249h1v1h-1zM319,246h1v2h-1zM320,247h1v2h-1zM322,248h2v1h-2zM323,249h2v1h-2zM327,246h2v3h-2zM331,247h1v2h-1zM332,248h1v2h-1zM335,247h1v2h-1zM336,248h1v2h-1zM340,248h2v1h-2zM341,249h2v1h-2zM344,247h1v2h-1zM345,248h1v2h-1zM349,247h2v2h-2zM349,249h1v1h-1zM353,246h1v2h-1zM354,247h1v2h-1zM158,251h2v3h-2zM162,251h2v3h-2zM166,250h2v2h-2zM166,252h1v1h-1zM170,250h1v3h-1zM171,250h1v1h-1zM175,251h2v1h-2zM176,252h2v1h-2zM178,250h1v3h-1zM179,250h1v1h-1zM183,251h3v1h-3zM183,252h2v1h-2zM187,251h2v1h-2zM188,252h2v1h-2zM191,251h1v3h-1zM192,252h1v2h-1zM196,250h1v2h-1zM197,251h1v2h-1zM200,250h2v1h-2zM201,251h2v1h-2zM205,250h2v3h-2zM208,251h2v2h-2zM209,253h1v1h-1zM213,250h1v3h-1zM214,251h1v2h-1zM218,251h3v1h-3zM218,252h2v1h-2zM221,250h3v1h-3zM221,251h2v1h-2zM225,251h1v2h-1zM226,252h1v2h-1zM230,251h2v1h-2zM231,252h2v1h-2zM234,251h1v3h-1zM235,251h1v1h-1zM239,250h1v3h-1zM240,251h1v2h-1zM243,251h1v3h-1zM244,251h1v1h-1zM248,250h1v2h-1zM249,251h1v2h-1zM251,251h2v3h-2zM255,250h2v1h-2zM256,251h2v1h-2zM260,250h2v2h-2zM261,252h1v1h-1zM264,251h2v2h-2zM264,253h1v1h-1zM269,251h2v3h-2zM272,252h3v1h-3zM272,253h2v1h-2zM277,251h1v2h-1zM278,252h1v2h-1zM281,251h1v3h-1zM282,251h1v1h-1zM286,251h2v2h-2zM286,253h1v1h-1zM290,251h1v2h-1zM291,252h1v2h-1zM295,251h1v2h-1zM296,252h1v2h-1zM299,250h2v3h-2zM303,251h1v3h-1zM304,252h1v2h-1zM307,250h1v3h-1zM308,251h1v2h-1zM311,251h1v2h-1zM312,252h1v2h-1zM317,251h1v3h-1zM318,252h1v2h-1zM321,251h2v1h-2zM322,252h2v1h-2zM325,251h2v2h-2zM325,253h1v1h-1zM330,250h2v3h-2zM333,251h1v3h-1zM334,251h1v1h-1zM338,252h3v1h-3zM338,253h2v1h-2zM342,251h1v2h-1zM343,252h1v2h-1zM347,251h1v3h-1zM348,252h1v2h-1zM351,250h3v1h-3zM351,251h2v1h-2zM355,251h2v3h-2zM156,255h2v1h-2zM157,256h2v1h-2zM160,254h1v3h-1zM161,254h1v1h-1zM163,254h2v3h-2zM168,255h2v2h-2zM168,257h1v1h-1zM172,254h1v3h-1zM173,255h1v2h-1zM177,254h1v2h-1zM178,255h1v2h-1zM180,255h2v2h-2zM180,257h1v1h-1zM185,255h2v2h-2zM185,257h1v1h-1zM189,255h1v3h-1zM190,256h1v2h-1zM194,255h2v2h-2zM195,257h1v1h-1zM198,254h2v2h-2zM198,256h1v1h-1zM202,254h1v3h-1zM203,254h1v1h-1zM207,255h1v3h-1zM208,256h1v2h-1zM211,254h2v3h-2zM216,254h3v1h-3zM216,255h2v1h-2zM220,254h2v2h-2zM220,256h1v1h-1zM224,255h2v2h-2zM224,257h1v1h-1zM228,255h1v3h-1zM229,255h1v1h-1zM232,254h2v1h-2zM233,255h2v1h-2zM237,254h1v2h-1zM238,255h1v2h-1zM241,254h1v2h-1zM242,255h1v2h-1zM246,254h3v1h-3zM246,255h2v1h-2zM249,255h2v2h-2zM250,257h1v1h-1zM254,255h2v2h-2zM255,257h1v1h-1zM259,255h3v1h-3zM259,256h2v1h-2zM262,255h2v2h-2zM263,257h1v1h-1zM267,255h2v2h-2zM268,257h1v1h-1zM271,255h1v3h-1zM272,256h1v2h-1zM276,254h3v1h-3zM276,255h2v1h-2zM280,254h2v3h-2zM284,254h2v3h-2zM288,255h2v1h-2zM289,256h2v1h-2zM293,254h1v3h-1zM294,255h1v2h-1zM297,255h2v1h-2zM298,256h2v1h-2zM301,255h2v2h-2zM301,257h1v1h-1zM305,255h2v2h-2zM305,257h1v1h-1zM310,255h2v3h-2zM315,254h2v2h-2zM315,256h1v1h-1zM318,255h2v2h-2zM318,257h1v1h-1zM323,254h2v2h-2zM323,256h1v1h-1zM326,255h2v2h-2zM327,257h1v1h-1zM331,255h2v1h-2zM332,256h2v1h-2zM335,254h3v1h-3zM335,255h2v1h-2zM339,255h3v1h-3zM339,256h2v1h-2zM344,254h2v2h-2zM345,256h1v1h-1zM348,254h1v3h-1zM349,255h1v2h-1zM353,254h1v3h-1zM354,254h1v1h-1zM158,259h1v2h-1zM159,260h1v2h-1zM162,259h1v2h-1zM163,260h1v2h-1zM166,258h2v2h-2zM166,260h1v1h-1zM171,259h3v1h-3zM171,260h2v1h-2zM175,259h2v3h-2zM178,259h1v3h-1zM179,259h1v1h-1zM183,259h3v1h-3zM183,260h2v1h-2zM187,259h2v2h-2zM188,261h1v1h-1zM191,259h1v2h-1zM192,260h1v2h-1zM196,259h2v3h-2zM200,259h3v1h-3zM200,260h2v1h-2zM204,258h2v2h-2zM204,260h1v1h-1zM208,258h3v1h-3zM208,259h2v1h-2zM213,258h3v1h-3zM213,259h2v1h-2zM218,259h1v3h-1zM219,260h1v2h-1zM222,258h1v3h-1zM223,258h1v1h-1zM226,259h1v2h-1zM227,260h1v2h-1zM230,259h1v3h-1zM231,260h1v2h-1zM235,258h2v2h-2zM236,260h1v1h-1zM239,259h2v2h-2zM240,261h1v1h-1zM243,258h2v1h-2zM244,259h2v1h-2zM248,259h2v2h-2zM249,261h1v1h-1zM251,259h2v2h-2zM251,261h1v1h-1zM256,259h2v2h-2zM256,261h1v1h-1zM261,259h2v2h-2zM261,261h1v1h-1zM264,258h2v2h-2zM264,260h1v1h-1zM270,259h2v2h-2zM270,261h1v1h-1zM274,259h2v2h-2zM274,261h1v1h-1zM277,258h3v1h-3zM277,259h2v1h-2zM282,258h1v2h-1zM283,259h1v2h-1zM287,259h1v3h-1zM288,260h1v2h-1zM290,258h2v2h-2zM290,260h1v1h-1zM294,258h2v2h-2zM295,260h1v1h-1zM299,258h2v2h-2zM299,260h1v1h-1zM304,258h1v3h-1zM305,258h1v1h-1zM308,259h3v1h-3zM308,260h2v1h-2zM312,258h1v2h-1zM313,259h1v2h-1zM316,259h1v2h-1zM317,260h1v2h-1zM320,258h2v3h-2zM325,258h1v2h-1zM326,259h1v2h-1zM330,259h2v1h-2zM331,260h2v1h-2zM333,258h1v3h-1zM334,259h1v2h-1zM338,258h2v2h-2zM338,260h1v1h-1zM342,258h1v2h-1zM343,259h1v2h-1zM346,259h2v2h-2zM346,261h1v1h-1zM351,258h2v2h-2zM351,260h1v1h-1zM356,258h3v1h-3zM356,259h2v1h-2zM155,263h2v2h-2zM155,265h1v1h-1zM159,263h2v3h-2zM163,263h3v1h-3zM163,264h2v1h-2zM169,262h3v1h-3zM169,263h2v1h-2zM173,262h2v2h-2zM173,264h1v1h-1zM177,263h2v3h-2zM181,263h2v2h-2zM181,265h1v1h-1zM185,262h2v1h-2zM186,263h2v1h-2zM189,263h2v2h-2zM190,265h1v1h-1zM193,262h2v2h-2zM193,264h1v1h-1zM198,263h1v3h-1zM199,264h1v2h-1zM203,263h2v2h-2zM203,265h1v1h-1zM206,263h3v1h-3zM206,264h2v1h-2zM211,263h1v2h-1zM212,264h1v2h-1zM215,262h3v1h-3zM215,263h2v1h-2zM220,262h1v2h-1zM221,263h1v2h-1zM223,262h3v1h-3zM223,263h2v1h-2zM227,263h2v2h-2zM227,265h1v1h-1zM232,263h1v3h-1zM233,263h1v1h-1zM237,262h2v3h-2zM241,262h2v1h-2zM242,263h2v1h-2zM245,262h2v2h-2zM245,264h1v1h-1zM250,263h1v3h-1zM251,264h1v2h-1zM254,262h2v1h-2zM255,263h2v1h-2zM258,263h2v1h-2zM259,264h2v1h-2zM263,262h1v3h-1zM264,262h1v1h-1zM267,262h2v3h-2zM270,263h2v2h-2zM271,265h1v1h-1zM276,263h2v2h-2zM276,265h1v1h-1zM279,263h1v3h-1zM280,263h1v1h-1zM285,262h2v1h-2zM286,263h2v1h-2zM288,262h1v3h-1zM289,262h1v1h-1zM292,262h2v2h-2zM292,264h1v1h-1zM297,263h1v2h-1zM298,264h1v2h-1zM302,262h1v3h-1zM303,263h1v2h-1zM305,263h1v2h-1zM306,264h1v2h-1zM311,262h1v2h-1zM312,263h1v2h-1zM314,262h3v1h-3zM314,263h2v1h-2zM319,262h2v2h-2zM319,264h1v1h-1zM323,263h3v1h-3zM323,264h2v1h-2zM327,262h2v1h-2zM328,263h2v1h-2zM332,263h2v3h-2zM336,263h1v3h-1zM337,264h1v2h-1zM340,262h1v2h-1zM341,263h1v2h-1zM344,263h1v3h-1zM345,264h1v2h-1zM349,262h1v2h-1zM350,263h1v2h-1zM352,263h2v2h-2zM353,265h1v1h-1zM158,266h1v3h-1zM159,266h1v1h-1zM161,266h1v3h-1zM162,266h1v1h-1zM166,267h2v3h-2zM170,266h2v3h-2zM174,266h2v1h-2zM175,267h2v1h-2zM179,267h2v3h-2zM182,267h2v2h-2zM183,269h1v1h-1zM188,266h3v1h-3zM188,267h2v1h-2zM192,266h2v3h-2zM195,267h1v3h-1zM196,268h1v2h-1zM200,266h2v2h-2zM201,268h1v1h-1zM204,267h2v2h-2zM205,269h1v1h-1zM209,266h2v1h-2zM210,267h2v1h-2zM213,266h1v3h-1zM214,267h1v2h-1zM217,266h2v3h-2zM221,266h2v2h-2zM221,268h1v1h-1zM226,266h2v3h-2zM230,266h2v2h-2zM230,268h1v1h-1zM235,267h1v2h-1zM236,268h1v2h-1zM239,266h1v3h-1zM240,266h1v1h-1zM243,266h1v3h-1zM244,266h1v1h-1zM248,267h2v3h-2zM251,266h1v2h-1zM252,267h1v2h-1zM256,267h2v1h-2zM257,268h2v1h-2zM261,267h2v2h-2zM262,269h1v1h-1zM265,267h2v3h-2zM269,266h3v1h-3zM269,267h2v1h-2zM273,266h2v3h-2zM278,267h3v1h-3zM278,268h2v1h-2zM282,266h1v3h-1zM283,266h1v1h-1zM286,266h1v3h-1zM287,266h1v1h-1zM290,266h1v2h-1zM291,267h1v2h-1zM295,267h2v2h-2zM295,269h1v1h-1zM298,267h2v1h-2zM299,268h2v1h-2zM304,267h1v2h-1zM305,268h1v2h-1zM308,266h2v2h-2zM308,268h1v1h-1zM312,266h2v1h-2zM313,267h2v1h-2zM317,266h2v2h-2zM317,268h1v1h-1zM321,266h2v2h-2zM321,268h1v1h-1zM324,266h3v1h-3zM324,267h2v1h-2zM329,267h2v3h-2zM333,266h1v3h-1zM334,266h1v1h-1zM337,266h1v2h-1zM338,267h1v2h-1zM342,266h1v2h-1zM343,267h1v2h-1zM346,266h1v3h-1zM347,266h1v1h-1zM350,266h2v2h-2zM351,268h1v1h-1zM355,266h1v3h-1zM356,267h1v2h-1zM155,270h1v3h-1zM156,271h1v2h-1zM159,270h2v1h-2zM160,271h2v1h-2zM164,270h1v3h-1zM165,270h1v1h-1zM168,270h2v3h-2zM172,269h1v3h-1zM173,270h1v2h-1zM176,270h2v2h-2zM176,272h1v1h-1zM180,270h3v1h-3zM180,271h2v1h-2zM184,270h2v2h-2zM185,272h1v1h-1zM189,270h1v2h-1zM190,271h1v2h-1zM194,270h2v3h-2zM198,270h2v3h-2zM203,270h1v3h-1zM204,270h1v1h-1zM206,270h1v2h-1zM207,271h1v2h-1zM211,270h1v3h-1zM212,271h1v2h-1zM216,270h2v2h-2zM216,272h1v1h-1zM219,270h2v2h-2zM220,272h1v1h-1zM223,270h1v3h-1zM224,270h1v1h-1zM228,270h2v3h-2zM232,270h3v1h-3zM232,271h2v1h-2zM237,270h3v1h-3zM237,271h2v1h-2zM240,269h1v3h-1zM241,269h1v1h-1zM245,270h2v3h-2zM250,271h1v3h-1zM251,271h1v1h-1zM254,271h1v2h-1zM255,272h1v2h-1zM258,271h3v1h-3zM258,272h2v1h-2zM262,270h2v2h-2zM263,272h1v1h-1zM267,269h3v1h-3zM267,270h2v1h-2zM270,271h3v1h-3zM270,272h2v1h-2zM275,270h2v2h-2zM275,272h1v1h-1zM280,269h1v3h-1zM281,269h1v1h-1zM285,270h1v3h-1zM286,270h1v1h-1zM289,271h1v3h-1zM290,272h1v2h-1zM292,270h2v3h-2zM296,270h1v2h-1zM297,271h1v2h-1zM301,270h1v2h-1zM302,271h1v2h-1zM306,270h1v3h-1zM307,270h1v1h-1zM310,270h2v1h-2zM311,271h2v1h-2zM315,271h1v2h-1zM316,272h1v2h-1zM318,270h2v1h-2zM319,271h2v1h-2zM323,270h3v1h-3zM323,271h2v1h-2zM327,270h1v3h-1zM328,271h1v2h-1zM331,271h2v1h-2zM332,272h2v1h-2zM336,270h2v3h-2zM340,269h2v2h-2zM341,271h1v1h-1zM344,270h2v2h-2zM344,272h1v1h-1zM348,270h3v1h-3zM348,271h2v1h-2zM352,270h3v1h-3zM352,271h2v1h-2zM157,274h2v1h-2zM158,275h2v1h-2zM162,273h1v3h-1zM163,273h1v1h-1zM166,273h1v3h-1zM167,274h1v2h-1zM171,273h3v1h-3zM171,274h2v1h-2zM174,275h1v3h-1zM175,276h1v2h-1zM179,274h1v2h-1zM180,275h1v2h-1zM183,274h1v3h-1zM184,275h1v2h-1zM187,275h2v1h-2zM188,276h2v1h-2zM192,274h2v1h-2zM193,275h2v1h-2zM196,275h1v3h-1zM197,275h1v1h-1zM200,275h3v1h-3zM200,276h2v1h-2zM205,273h2v3h-2zM209,273h1v3h-1zM210,274h1v2h-1zM214,274h2v1h-2zM215,275h2v1h-2zM218,274h1v3h-1zM219,275h1v2h-1zM221,274h2v1h-2zM222,275h2v1h-2zM225,274h2v1h-2zM226,275h2v1h-2zM230,273h1v3h-1zM231,273h1v1h-1zM234,274h2v2h-2zM235,276h1v1h-1zM238,273h1v3h-1zM239,274h1v2h-1zM243,274h2v2h-2zM244,276h1v1h-1zM247,274h2v1h-2zM248,275h2v1h-2zM253,275h2v2h-2zM254,277h1v1h-1zM256,274h3v1h-3zM256,275h2v1h-2zM261,275h2v1h-2zM262,276h2v1h-2zM265,275h2v2h-2zM266,277h1v1h-1zM268,274h2v1h-2zM269,275h2v1h-2zM273,274h2v2h-2zM274,276h1v1h-1zM278,274h1v3h-1zM279,275h1v2h-1zM282,273h2v2h-2zM282,275h1v1h-1zM286,274h2v2h-2zM286,276h1v1h-1zM291,273h1v2h-1zM292,274h1v2h-1zM295,274h3v1h-3zM295,275h2v1h-2zM298,274h1v3h-1zM299,275h1v2h-1zM304,274h2v3h-2zM307,274h1v3h-1zM308,274h1v1h-1zM312,273h2v2h-2zM312,275h1v1h-1zM316,274h1v3h-1zM317,275h1v2h-1zM320,274h2v2h-2zM321,276h1v1h-1zM325,275h3v1h-3zM325,276h2v1h-2zM329,274h2v2h-2zM330,276h1v1h-1zM334,273h3v1h-3zM334,274h2v1h-2zM337,274h2v2h-2zM337,276h1v1h-1zM342,273h2v3h-2zM346,274h2v1h-2zM347,275h2v1h-2zM350,274h1v3h-1zM351,275h1v2h-1zM356,274h2v1h-2zM357,275h2v1h-2zM156,277h2v3h-2zM159,278h2v1h-2zM160,279h2v1h-2zM164,277h1v3h-1zM165,278h1v2h-1zM167,278h2v3h-2zM172,278h2v2h-2zM173,280h1v1h-1zM176,279h2v2h-2zM177,281h1v1h-1zM181,277h2v1h-2zM182,278h2v1h-2zM185,278h2v3h-2zM190,277h2v2h-2zM190,279h1v1h-1zM194,277h1v3h-1zM195,278h1v2h-1zM199,278h3v1h-3zM199,279h2v1h-2zM202,277h2v2h-2zM202,279h1v1h-1zM207,278h1v3h-1zM208,278h1v1h-1zM210,278h1v3h-1zM211,279h1v2h-1zM216,278h1v3h-1zM217,279h1v2h-1zM220,278h2v1h-2zM221,279h2v1h-2zM223,277h2v2h-2zM223,279h1v1h-1zM228,277h2v3h-2zM233,278h3v1h-3zM233,279h2v1h-2zM237,278h2v2h-2zM238,280h1v1h-1zM241,278h2v1h-2zM242,279h2v1h-2zM246,277h2v2h-2zM246,279h1v1h-1zM250,277h2v2h-2zM250,279h1v1h-1zM254,278h3v1h-3zM254,279h2v1h-2zM258,278h1v3h-1zM259,279h1v2h-1zM262,278h1v2h-1zM263,279h1v2h-1zM267,278h1v3h-1zM268,279h1v2h-1zM271,278h1v2h-1zM272,279h1v2h-1zM276,278h2v2h-2zM277,280h1v1h-1zM279,278h1v2h-1zM280,279h1v2h-1zM284,278h2v1h-2zM285,279h2v1h-2zM288,278h2v1h-2zM289,279h2v1h-2zM293,278h2v3h-2zM297,278h2v2h-2zM297,280h1v1h-1zM302,278h2v2h-2zM303,280h1v1h-1zM305,278h2v2h-2zM305,280h1v1h-1zM310,279h1v3h-1zM311,279h1v1h-1zM315,277h3v1h-3zM315,278h2v1h-2zM319,279h3v1h-3zM319,280h2v1h-2zM323,278h3v1h-3zM323,279h2v1h-2zM326,278h2v2h-2zM327,280h1v1h-1zM331,278h2v3h-2zM335,277h1v2h-1zM336,278h1v2h-1zM339,279h1v3h-1zM340,279h1v1h-1zM344,278h2v2h-2zM345,280h1v1h-1zM348,278h1v3h-1zM349,278h1v1h-1zM353,277h1v2h-1zM354,278h1v2h-1zM157,281h1v3h-1zM158,282h1v2h-1zM161,282h1v3h-1zM162,282h1v1h-1zM165,281h2v1h-2zM166,282h2v1h-2zM171,282h1v3h-1zM172,282h1v1h-1zM174,281h1v3h-1zM175,282h1v2h-1zM178,281h1v2h-1zM179,282h1v2h-1zM183,282h1v3h-1zM184,282h1v1h-1zM187,282h1v2h-1zM188,283h1v2h-1zM192,281h2v2h-2zM192,283h1v1h-1zM196,282h2v2h-2zM196,284h1v1h-1zM200,282h1v3h-1zM201,282h1v1h-1zM205,282h2v3h-2zM209,282h2v2h-2zM209,284h1v1h-1zM213,281h2v2h-2zM214,283h1v1h-1zM217,282h1v3h-1zM218,283h1v2h-1zM222,282h2v3h-2zM227,282h2v3h-2zM231,282h1v3h-1zM232,283h1v2h-1zM234,282h2v3h-2zM240,281h1v2h-1zM241,282h1v2h-1zM243,281h2v3h-2zM247,283h2v2h-2zM248,285h1v1h-1zM252,282h1v3h-1zM253,282h1v1h-1zM256,283h2v2h-2zM256,285h1v1h-1zM261,281h1v3h-1zM262,282h1v2h-1zM265,282h2v3h-2zM269,282h1v3h-1zM270,283h1v2h-1zM273,282h2v3h-2zM277,282h1v3h-1zM278,283h1v2h-1zM282,282h1v2h-1zM283,283h1v2h-1zM287,282h2v2h-2zM287,284h1v1h-1zM291,281h1v2h-1zM292,282h1v2h-1zM295,282h2v2h-2zM295,284h1v1h-1zM300,282h1v2h-1zM301,283h1v2h-1zM303,281h3v1h-3zM303,282h2v1h-2zM307,281h3v1h-3zM307,282h2v1h-2zM312,282h1v3h-1zM313,283h1v2h-1zM317,281h1v3h-1zM318,282h1v2h-1zM320,282h1v3h-1zM321,282h1v1h-1zM325,281h2v2h-2zM325,283h1v1h-1zM329,282h1v2h-1zM330,283h1v2h-1zM334,281h3v1h-3zM334,282h2v1h-2zM338,281h1v2h-1zM339,282h1v2h-1zM342,282h1v2h-1zM343,283h1v2h-1zM347,282h2v2h-2zM348,284h1v1h-1zM351,282h1v3h-1zM352,282h1v1h-1zM355,282h1v2h-1zM356,283h1v2h-1zM154,285h2v2h-2zM155,287h1v1h-1zM160,285h2v2h-2zM160,287h1v1h-1zM163,286h2v2h-2zM163,288h1v1h-1zM168,285h1v3h-1zM169,286h1v2h-1zM172,286h1v2h-1zM173,287h1v2h-1zM176,285h2v2h-2zM177,287h1v1h-1zM181,285h2v3h-2zM186,286h1v3h-1zM187,286h1v1h-1zM189,286h1v2h-1zM190,287h1v2h-1zM194,286h1v3h-1zM195,287h1v2h-1zM197,286h2v1h-2zM198,287h2v1h-2zM202,286h2v3h-2zM207,286h1v3h-1zM208,286h1v1h-1zM212,285h1v3h-1zM213,285h1v1h-1zM215,285h2v2h-2zM216,287h1v1h-1zM220,286h1v2h-1zM221,287h1v2h-1zM224,286h1v2h-1zM225,287h1v2h-1zM227,286h2v2h-2zM228,288h1v1h-1zM232,286h2v2h-2zM233,288h1v1h-1zM236,286h2v1h-2zM237,287h2v1h-2zM240,286h1v3h-1zM241,287h1v2h-1zM245,286h3v1h-3zM245,287h2v1h-2zM250,286h2v3h-2zM253,286h2v2h-2zM254,288h1v1h-1zM258,285h2v2h-2zM258,287h1v1h-1zM263,286h2v1h-2zM264,287h2v1h-2zM266,286h2v1h-2zM267,287h2v1h-2zM271,286h2v3h-2zM275,285h1v2h-1zM276,286h1v2h-1zM280,285h1v2h-1zM281,286h1v2h-1zM284,286h1v3h-1zM285,286h1v1h-1zM288,286h1v3h-1zM289,286h1v1h-1zM292,286h2v3h-2zM297,286h2v2h-2zM297,288h1v1h-1zM301,285h3v1h-3zM301,286h2v1h-2zM306,286h3v1h-3zM306,287h2v1h-2zM309,286h2v2h-2zM310,288h1v1h-1zM314,285h2v1h-2zM315,286h2v1h-2zM318,286h2v3h-2zM323,285h2v1h-2zM324,286h2v1h-2zM327,285h1v2h-1zM328,286h1v2h-1zM332,286h2v3h-2zM335,285h2v3h-2zM340,286h1v2h-1zM341,287h1v2h-1zM344,286h2v2h-2zM344,288h1v1h-1zM349,285h2v3h-2zM353,286h1v3h-1zM354,286h1v1h-1zM158,290h3v1h-3zM158,291h2v1h-2zM162,289h1v3h-1zM163,290h1v2h-1zM166,290h3v1h-3zM166,291h2v1h-2zM171,290h2v2h-2zM171,292h1v1h-1zM174,290h1v3h-1zM175,291h1v2h-1zM179,290h1v2h-1zM180,291h1v2h-1zM183,289h1v2h-1zM184,290h1v2h-1zM188,290h2v1h-2zM189,291h2v1h-2zM192,290h1v3h-1zM193,290h1v1h-1zM196,290h1v3h-1zM197,291h1v2h-1zM201,290h1v3h-1zM202,291h1v2h-1zM204,289h1v3h-1zM205,289h1v1h-1zM208,290h2v2h-2zM209,292h1v1h-1zM213,289h2v2h-2zM214,291h1v1h-1zM218,289h3v1h-3zM218,290h2v1h-2zM222,290h2v1h-2zM223,291h2v1h-2zM225,289h2v2h-2zM225,291h1v1h-1zM230,289h1v3h-1zM231,290h1v2h-1zM235,289h3v1h-3zM235,290h2v1h-2zM239,290h2v3h-2zM244,289h2v1h-2zM245,290h2v1h-2zM248,289h3v1h-3zM248,290h2v1h-2zM252,289h3v1h-3zM252,290h2v1h-2zM256,289h2v1h-2zM257,290h2v1h-2zM261,290h2v3h-2zM264,290h2v1h-2zM265,291h2v1h-2zM269,290h2v3h-2zM273,290h2v1h-2zM274,291h2v1h-2zM278,289h2v3h-2zM282,290h2v1h-2zM283,291h2v1h-2zM287,289h1v3h-1zM288,289h1v1h-1zM290,289h2v3h-2zM295,290h2v2h-2zM296,292h1v1h-1zM299,290h1v3h-1zM300,291h1v2h-1zM304,289h1v3h-1zM305,289h1v1h-1zM308,289h2v3h-2zM312,290h2v2h-2zM313,292h1v1h-1zM317,290h1v2h-1zM318,291h1v2h-1zM320,290h2v1h-2zM321,291h2v1h-2zM324,290h3v1h-3zM324,291h2v1h-2zM329,290h2v1h-2zM330,291h2v1h-2zM334,290h2v2h-2zM335,292h1v1h-1zM338,289h2v2h-2zM339,291h1v1h-1zM341,289h2v2h-2zM342,291h1v1h-1zM346,289h1v2h-1zM347,290h1v2h-1zM351,289h2v2h-2zM351,291h1v1h-1zM355,289h2v2h-2zM356,291h1v1h-1zM154,294h2v1h-2zM155,295h2v1h-2zM159,293h1v3h-1zM160,293h1v1h-1zM164,293h2v1h-2zM165,294h2v1h-2zM169,294h2v2h-2zM170,296h1v1h-1zM173,294h2v3h-2zM177,293h1v3h-1zM178,293h1v1h-1zM181,293h1v2h-1zM182,294h1v2h-1zM185,294h1v2h-1zM186,295h1v2h-1zM190,294h2v3h-2zM193,293h3v1h-3zM193,294h2v1h-2zM197,294h3v1h-3zM197,295h2v1h-2zM203,294h2v2h-2zM203,296h1v1h-1zM206,293h1v3h-1zM207,293h1v1h-1zM211,293h2v2h-2zM211,295h1v1h-1zM216,293h2v1h-2zM217,294h2v1h-2zM220,294h1v3h-1zM221,295h1v2h-1zM223,294h2v2h-2zM223,296h1v1h-1zM228,293h2v2h-2zM229,295h1v1h-1zM232,294h1v3h-1zM233,295h1v2h-1zM236,293h2v1h-2zM237,294h2v1h-2zM242,293h2v2h-2zM243,295h1v1h-1zM246,293h2v3h-2zM250,293h2v2h-2zM251,295h1v1h-1zM255,293h3v1h-3zM255,294h2v1h-2zM258,293h1v2h-1zM259,294h1v2h-1zM263,293h1v2h-1zM264,294h1v2h-1zM268,293h2v1h-2zM269,294h2v1h-2zM271,294h1v3h-1zM272,295h1v2h-1zM276,294h1v3h-1zM277,294h1v1h-1zM279,293h2v2h-2zM280,295h1v1h-1zM284,293h2v2h-2zM285,295h1v1h-1zM288,293h3v1h-3zM288,294h2v1h-2zM293,293h1v2h-1zM294,294h1v2h-1zM298,293h2v2h-2zM299,295h1v1h-1zM301,293h1v3h-1zM302,294h1v2h-1zM305,294h2v2h-2zM306,296h1v1h-1zM310,293h2v2h-2zM310,295h1v1h-1zM315,293h2v1h-2zM316,294h2v1h-2zM318,293h2v2h-2zM318,295h1v1h-1zM323,293h2v3h-2zM328,293h2v2h-2zM329,295h1v1h-1zM331,294h1v2h-1zM332,295h1v2h-1zM336,293h1v3h-1zM337,294h1v2h-1zM340,294h2v3h-2zM344,294h2v1h-2zM345,295h2v1h-2zM348,293h1v2h-1zM349,294h1v2h-1zM353,293h2v2h-2zM353,295h1v1h-1zM157,298h1v3h-1zM158,299h1v2h-1zM161,298h2v2h-2zM161,300h1v1h-1zM166,297h2v2h-2zM167,299h1v1h-1zM171,298h1v3h-1zM172,299h1v2h-1zM174,297h2v3h-2zM178,297h2v1h-2zM179,298h2v1h-2zM183,298h2v1h-2zM184,299h2v1h-2zM187,297h2v3h-2zM191,297h2v2h-2zM191,299h1v1h-1zM195,296h3v1h-3zM195,297h2v1h-2zM200,297h3v1h-3zM200,298h2v1h-2zM204,297h3v1h-3zM204,298h2v1h-2zM209,298h1v3h-1zM210,298h1v1h-1zM213,297h2v2h-2zM214,299h1v1h-1zM217,297h2v1h-2zM218,298h2v1h-2zM222,297h2v2h-2zM223,299h1v1h-1zM226,297h2v1h-2zM227,298h2v1h-2zM230,298h1v3h-1zM231,298h1v1h-1zM234,298h2v3h-2zM238,297h2v2h-2zM238,299h1v1h-1zM243,297h1v2h-1zM244,298h1v2h-1zM247,298h1v3h-1zM248,299h1v2h-1zM251,297h2v2h-2zM251,299h1v1h-1zM255,297h2v2h-2zM255,299h1v1h-1zM260,298h3v1h-3zM260,299h2v1h-2zM265,297h2v3h-2zM269,298h2v3h-2zM273,298h2v3h-2zM278,297h3v1h-3zM278,298h2v1h-2zM282,297h2v2h-2zM282,299h1v1h-1zM286,298h2v2h-2zM286,300h1v1h-1zM291,298h2v2h-2zM291,300h1v1h-1zM295,297h2v1h-2zM296,298h2v1h-2zM298,297h2v2h-2zM299,299h1v1h-1zM303,298h1v2h-1zM304,299h1v2h-1zM308,297h2v1h-2zM309,298h2v1h-2zM312,297h2v1h-2zM313,298h2v1h-2zM317,297h1v3h-1zM318,298h1v2h-1zM320,298h2v1h-2zM321,299h2v1h-2zM324,297h3v1h-3zM324,298h2v1h-2zM329,297h2v1h-2zM330,298h2v1h-2zM333,297h1v2h-1zM334,298h1v2h-1zM339,297h2v1h-2zM340,298h2v1h-2zM343,298h2v3h-2zM346,297h2v3h-2zM351,298h2v1h-2zM352,299h2v1h-2zM355,296h1v2h-1zM356,297h1v2h-1z" fill="#ff0044" shape-rendering="crispEdges"/></g></g>
<ellipse cx="220.5" cy="243.9" rx="7" ry="7.6" fill="#ffcc33"/>
<ellipse cx="220.5" cy="243.9" rx="5.8" ry="6.6" fill="#fff" stroke="#1400e6" stroke-width="1"/>
<circle cx="220.6" cy="243.9" r="3" fill="#1400e6"/>
<ellipse cx="282.3" cy="248.9" rx="7" ry="7.6" fill="#ffcc33"/>
<ellipse cx="282.3" cy="248.9" rx="5.8" ry="6.6" fill="#fff" stroke="#1400e6" stroke-width="1"/>
<circle cx="282.40000000000003" cy="248.9" r="3" fill="#1400e6"/>
<ellipse cx="247.4" cy="274.4" rx="12.9" ry="8.8" fill="#ffcc33" stroke="#1400e6" stroke-width="1" stroke-dasharray="2.2 2.2"/>
<ellipse cx="247.5" cy="274.8" rx="6.4" ry="4.1" fill="#1400e6"/>
<path d="M156.00,299.60 L177.03,288.87 A6.10,6.10 0 1 1 179.59,300.40 Z" fill="#ff0044" stroke="#ff0044" stroke-width="0.9"/>
<path d="M156.00,299.60 L177.03,288.87 A6.10,6.10 0 1 1 179.59,300.40 Z" fill="none" stroke="#1400e6" stroke-width="0.9" stroke-dasharray="1 2.2"/>
<path d="M178.28,287.47 A7.00,7.00 0 0 1 181.32,301.13" fill="none" stroke="#00e060" stroke-width="1.9"/>
<path d="M178.06,286.49 A8.00,8.00 0 0 1 181.54,302.11" fill="none" stroke="#1400e6" stroke-width="0.8" stroke-dasharray="1 1.3"/>
<path d="M178.48,288.39 A6.05,6.05 0 0 1 181.12,300.21" fill="none" stroke="#1400e6" stroke-width="0.7" stroke-dasharray="1 1.6"/>
<path d="M154.00,266.00 L177.90,262.85 A6.10,6.10 0 1 1 176.52,274.60 Z" fill="#ff0044" stroke="#ff0044" stroke-width="0.9"/>
<path d="M154.00,266.00 L177.90,262.85 A6.10,6.10 0 1 1 176.52,274.60 Z" fill="none" stroke="#1400e6" stroke-width="0.9" stroke-dasharray="1 2.2"/>
<path d="M179.52,261.95 A7.00,7.00 0 0 1 177.88,275.85" fill="none" stroke="#00e060" stroke-width="1.9"/>
<path d="M179.63,260.95 A8.00,8.00 0 0 1 177.77,276.85" fill="none" stroke="#1400e6" stroke-width="0.8" stroke-dasharray="1 1.3"/>
<path d="M179.41,262.89 A6.05,6.05 0 0 1 177.99,274.91" fill="none" stroke="#1400e6" stroke-width="0.7" stroke-dasharray="1 1.6"/>
<path d="M351.90,295.10 L329.90,298.43 A6.00,6.00 0 1 1 331.21,286.92 Z" fill="#ff0044" stroke="#ff0044" stroke-width="0.9"/>
<path d="M351.90,295.10 L329.90,298.43 A6.00,6.00 0 1 1 331.21,286.92 Z" fill="none" stroke="#1400e6" stroke-width="0.9" stroke-dasharray="1 2.2"/>
<path d="M328.22,299.36 A6.90,6.90 0 0 1 329.78,285.64" fill="none" stroke="#00e060" stroke-width="1.9"/>
<path d="M328.11,300.35 A7.90,7.90 0 0 1 329.89,284.65" fill="none" stroke="#1400e6" stroke-width="0.8" stroke-dasharray="1 1.3"/>
<path d="M328.33,298.41 A5.95,5.95 0 0 1 329.67,286.59" fill="none" stroke="#1400e6" stroke-width="0.7" stroke-dasharray="1 1.6"/>
<path d="M216.00,184.90 L230.44,205.63 A5.90,5.90 0 1 1 219.77,209.88 Z" fill="#ff0044" stroke="#ff0044" stroke-width="0.9"/>
<path d="M216.00,184.90 L230.44,205.63 A5.90,5.90 0 1 1 219.77,209.88 Z" fill="none" stroke="#1400e6" stroke-width="0.9" stroke-dasharray="1 2.2"/>
<path d="M231.92,206.48 A6.80,6.80 0 0 1 219.28,211.52" fill="none" stroke="#00e060" stroke-width="1.9"/>
<path d="M232.85,206.11 A7.80,7.80 0 0 1 218.35,211.89" fill="none" stroke="#1400e6" stroke-width="0.8" stroke-dasharray="1 1.3"/>
<path d="M231.03,206.84 A5.85,5.85 0 0 1 220.17,211.16" fill="none" stroke="#1400e6" stroke-width="0.7" stroke-dasharray="1 1.6"/>
<path d="M351.30,264.70 L330.52,272.44 A5.80,5.80 0 1 1 329.40,261.27 Z" fill="#ff0044" stroke="#ff0044" stroke-width="0.9"/>
<path d="M351.30,264.70 L330.52,272.44 A5.80,5.80 0 1 1 329.40,261.27 Z" fill="none" stroke="#1400e6" stroke-width="0.9" stroke-dasharray="1 2.2"/>
<path d="M329.17,273.67 A6.70,6.70 0 0 1 327.83,260.33" fill="none" stroke="#00e060" stroke-width="1.9"/>
<path d="M329.27,274.66 A7.70,7.70 0 0 1 327.73,259.34" fill="none" stroke="#1400e6" stroke-width="0.8" stroke-dasharray="1 1.3"/>
<path d="M329.08,272.72 A5.75,5.75 0 0 1 327.92,261.28" fill="none" stroke="#1400e6" stroke-width="0.7" stroke-dasharray="1 1.6"/>
<path d="M253.50,179.60 L259.05,203.72 A5.70,5.70 0 1 1 247.95,203.72 Z" fill="#ff0044" stroke="#ff0044" stroke-width="0.9"/>
<path d="M253.50,179.60 L259.05,203.72 A5.70,5.70 0 1 1 247.95,203.72 Z" fill="none" stroke="#1400e6" stroke-width="0.9" stroke-dasharray="1 2.2"/>
<path d="M260.10,205.00 A6.60,6.60 0 0 1 246.90,205.00" fill="none" stroke="#00e060" stroke-width="1.9"/>
<path d="M261.10,205.00 A7.60,7.60 0 0 1 245.90,205.00" fill="none" stroke="#1400e6" stroke-width="0.8" stroke-dasharray="1 1.3"/>
<path d="M259.15,205.00 A5.65,5.65 0 0 1 247.85,205.00" fill="none" stroke="#1400e6" stroke-width="0.7" stroke-dasharray="1 1.6"/>
<path d="M337.40,308.50 L318.00,308.50 A5.50,5.50 0 1 1 320.89,298.32 Z" fill="#ff0044" stroke="#ff0044" stroke-width="0.9"/>
<path d="M337.40,308.50 L318.00,308.50 A5.50,5.50 0 1 1 320.89,298.32 Z" fill="none" stroke="#1400e6" stroke-width="0.9" stroke-dasharray="1 2.2"/>
<path d="M316.25,309.16 A6.40,6.40 0 0 1 319.75,296.84" fill="none" stroke="#00e060" stroke-width="1.9"/>
<path d="M315.98,310.12 A7.40,7.40 0 0 1 320.02,295.88" fill="none" stroke="#1400e6" stroke-width="0.8" stroke-dasharray="1 1.3"/>
<path d="M316.51,308.24 A5.45,5.45 0 0 1 319.49,297.76" fill="none" stroke="#1400e6" stroke-width="0.7" stroke-dasharray="1 1.6"/>
<path d="M169.50,332.20 L187.15,314.88 A5.50,5.50 0 1 1 192.83,323.99 Z" fill="#ff0044" stroke="#ff0044" stroke-width="0.9"/>
<path d="M169.50,332.20 L187.15,314.88 A5.50,5.50 0 1 1 192.83,323.99 Z" fill="none" stroke="#1400e6" stroke-width="0.9" stroke-dasharray="1 2.2"/>
<path d="M187.61,313.37 A6.40,6.40 0 0 1 194.39,324.23" fill="none" stroke="#00e060" stroke-width="1.9"/>
<path d="M187.09,312.52 A7.40,7.40 0 0 1 194.91,325.08" fill="none" stroke="#1400e6" stroke-width="0.8" stroke-dasharray="1 1.3"/>
<path d="M188.12,314.17 A5.45,5.45 0 0 1 193.88,323.43" fill="none" stroke="#1400e6" stroke-width="0.7" stroke-dasharray="1 1.6"/>
<path d="M168.40,281.20 L187.42,275.90 A5.50,5.50 0 1 1 187.42,286.50 Z" fill="#ff0044" stroke="#ff0044" stroke-width="0.9"/>
<path d="M168.40,281.20 L187.42,275.90 A5.50,5.50 0 1 1 187.42,286.50 Z" fill="none" stroke="#1400e6" stroke-width="0.9" stroke-dasharray="1 2.2"/>
<path d="M188.90,274.80 A6.40,6.40 0 0 1 188.90,287.60" fill="none" stroke="#00e060" stroke-width="1.9"/>
<path d="M188.90,273.80 A7.40,7.40 0 0 1 188.90,288.60" fill="none" stroke="#1400e6" stroke-width="0.8" stroke-dasharray="1 1.3"/>
<path d="M188.90,275.75 A5.45,5.45 0 0 1 188.90,286.65" fill="none" stroke="#1400e6" stroke-width="0.7" stroke-dasharray="1 1.6"/>
<path d="M287.80,184.90 L283.52,210.20 A5.40,5.40 0 1 1 273.69,206.33 Z" fill="#ff0044" stroke="#ff0044" stroke-width="0.9"/>
<path d="M287.80,184.90 L283.52,210.20 A5.40,5.40 0 1 1 273.69,206.33 Z" fill="none" stroke="#1400e6" stroke-width="0.9" stroke-dasharray="1 2.2"/>
<path d="M284.06,211.61 A6.30,6.30 0 0 1 272.34,206.99" fill="none" stroke="#00e060" stroke-width="1.9"/>
<path d="M284.99,211.97 A7.30,7.30 0 0 1 271.41,206.63" fill="none" stroke="#1400e6" stroke-width="0.8" stroke-dasharray="1 1.3"/>
<path d="M283.18,211.26 A5.35,5.35 0 0 1 273.22,207.34" fill="none" stroke="#1400e6" stroke-width="0.7" stroke-dasharray="1 1.6"/>
<path d="M340.00,281.60 L322.57,285.19 A5.30,5.30 0 1 1 323.44,275.07 Z" fill="#ff0044" stroke="#ff0044" stroke-width="0.9"/>
<path d="M340.00,281.60 L322.57,285.19 A5.30,5.30 0 1 1 323.44,275.07 Z" fill="none" stroke="#1400e6" stroke-width="0.9" stroke-dasharray="1 2.2"/>
<path d="M320.97,286.18 A6.20,6.20 0 0 1 322.03,273.82" fill="none" stroke="#00e060" stroke-width="1.9"/>
<path d="M320.88,287.17 A7.20,7.20 0 0 1 322.12,272.83" fill="none" stroke="#1400e6" stroke-width="0.8" stroke-dasharray="1 1.3"/>
<path d="M321.05,285.23 A5.25,5.25 0 0 1 321.95,274.77" fill="none" stroke="#1400e6" stroke-width="0.7" stroke-dasharray="1 1.6"/>
<path d="M342.30,330.50 L318.61,321.45 A5.30,5.30 0 1 1 324.22,312.72 Z" fill="#ff0044" stroke="#ff0044" stroke-width="0.9"/>
<path d="M342.30,330.50 L318.61,321.45 A5.30,5.30 0 1 1 324.22,312.72 Z" fill="none" stroke="#1400e6" stroke-width="0.9" stroke-dasharray="1 2.2"/>
<path d="M317.15,321.72 A6.20,6.20 0 0 1 323.85,311.28" fill="none" stroke="#00e060" stroke-width="1.9"/>
<path d="M316.61,322.56 A7.20,7.20 0 0 1 324.39,310.44" fill="none" stroke="#1400e6" stroke-width="0.8" stroke-dasharray="1 1.3"/>
<path d="M317.66,320.92 A5.25,5.25 0 0 1 323.34,312.08" fill="none" stroke="#1400e6" stroke-width="0.7" stroke-dasharray="1 1.6"/>
<path d="M165.00,233.30 L188.60,238.62 A5.00,5.00 0 1 1 184.56,247.54 Z" fill="#ff0044" stroke="#ff0044" stroke-width="0.9"/>
<path d="M165.00,233.30 L188.60,238.62 A5.00,5.00 0 1 1 184.56,247.54 Z" fill="none" stroke="#1400e6" stroke-width="0.9" stroke-dasharray="1 2.2"/>
<path d="M189.94,238.13 A5.90,5.90 0 0 1 185.06,248.87" fill="none" stroke="#00e060" stroke-width="1.9"/>
<path d="M190.35,237.22 A6.90,6.90 0 0 1 184.65,249.78" fill="none" stroke="#1400e6" stroke-width="0.8" stroke-dasharray="1 1.3"/>
<path d="M189.54,238.99 A4.95,4.95 0 0 1 185.46,248.01" fill="none" stroke="#1400e6" stroke-width="0.7" stroke-dasharray="1 1.6"/>
<path d="M315.90,205.10 L304.40,226.38 A5.00,5.00 0 1 1 296.90,220.07 Z" fill="#ff0044" stroke="#ff0044" stroke-width="0.9"/>
<path d="M315.90,205.10 L304.40,226.38 A5.00,5.00 0 1 1 296.90,220.07 Z" fill="none" stroke="#1400e6" stroke-width="0.9" stroke-dasharray="1 2.2"/>
<path d="M304.51,227.80 A5.90,5.90 0 0 1 295.49,220.20" fill="none" stroke="#00e060" stroke-width="1.9"/>
<path d="M305.28,228.44 A6.90,6.90 0 0 1 294.72,219.56" fill="none" stroke="#1400e6" stroke-width="0.8" stroke-dasharray="1 1.3"/>
<path d="M303.79,227.19 A4.95,4.95 0 0 1 296.21,220.81" fill="none" stroke="#1400e6" stroke-width="0.7" stroke-dasharray="1 1.6"/>
<path d="M174.60,312.50 L191.45,299.54 A5.00,5.00 0 1 1 195.46,308.41 Z" fill="#ff0044" stroke="#ff0044" stroke-width="0.9"/>
<path d="M174.60,312.50 L191.45,299.54 A5.00,5.00 0 1 1 195.46,308.41 Z" fill="none" stroke="#1400e6" stroke-width="0.9" stroke-dasharray="1 2.2"/>
<path d="M192.07,298.12 A5.90,5.90 0 0 1 196.93,308.88" fill="none" stroke="#00e060" stroke-width="1.9"/>
<path d="M191.66,297.21 A6.90,6.90 0 0 1 197.34,309.79" fill="none" stroke="#1400e6" stroke-width="0.8" stroke-dasharray="1 1.3"/>
<path d="M192.46,298.99 A4.95,4.95 0 0 1 196.54,308.01" fill="none" stroke="#1400e6" stroke-width="0.7" stroke-dasharray="1 1.6"/>
<path d="M184.20,204.00 L204.55,220.16 A4.90,4.90 0 1 1 197.26,226.46 Z" fill="#ff0044" stroke="#ff0044" stroke-width="0.9"/>
<path d="M184.20,204.00 L204.55,220.16 A4.90,4.90 0 1 1 197.26,226.46 Z" fill="none" stroke="#1400e6" stroke-width="0.9" stroke-dasharray="1 2.2"/>
<path d="M205.89,220.21 A5.80,5.80 0 0 1 197.11,227.79" fill="none" stroke="#00e060" stroke-width="1.9"/>
<path d="M206.64,219.55 A6.80,6.80 0 0 1 196.36,228.45" fill="none" stroke="#1400e6" stroke-width="0.8" stroke-dasharray="1 1.3"/>
<path d="M205.17,220.83 A4.85,4.85 0 0 1 197.83,227.17" fill="none" stroke="#1400e6" stroke-width="0.7" stroke-dasharray="1 1.6"/>
<path d="M235.50,191.40 L244.39,211.85 A4.90,4.90 0 1 1 235.00,213.69 Z" fill="#ff0044" stroke="#ff0044" stroke-width="0.9"/>
<path d="M235.50,191.40 L244.39,211.85 A4.90,4.90 0 1 1 235.00,213.69 Z" fill="none" stroke="#1400e6" stroke-width="0.9" stroke-dasharray="1 2.2"/>
<path d="M245.59,212.68 A5.80,5.80 0 0 1 234.21,214.92" fill="none" stroke="#00e060" stroke-width="1.9"/>
<path d="M246.57,212.49 A6.80,6.80 0 0 1 233.23,215.11" fill="none" stroke="#1400e6" stroke-width="0.8" stroke-dasharray="1 1.3"/>
<path d="M244.66,212.87 A4.85,4.85 0 0 1 235.14,214.73" fill="none" stroke="#1400e6" stroke-width="0.7" stroke-dasharray="1 1.6"/>
<path d="M268.70,194.00 L269.30,215.16 A4.90,4.90 0 1 1 259.94,213.27 Z" fill="#ff0044" stroke="#ff0044" stroke-width="0.9"/>
<path d="M268.70,194.00 L269.30,215.16 A4.90,4.90 0 1 1 259.94,213.27 Z" fill="none" stroke="#1400e6" stroke-width="0.9" stroke-dasharray="1 2.2"/>
<path d="M270.09,216.45 A5.80,5.80 0 0 1 258.71,214.15" fill="none" stroke="#00e060" stroke-width="1.9"/>
<path d="M271.07,216.65 A6.80,6.80 0 0 1 257.73,213.95" fill="none" stroke="#1400e6" stroke-width="0.8" stroke-dasharray="1 1.3"/>
<path d="M269.15,216.26 A4.85,4.85 0 0 1 259.65,214.34" fill="none" stroke="#1400e6" stroke-width="0.7" stroke-dasharray="1 1.6"/>
<path d="M339.50,227.70 L321.07,247.35 A4.90,4.90 0 1 1 315.33,239.60 Z" fill="#ff0044" stroke="#ff0044" stroke-width="0.9"/>
<path d="M339.50,227.70 L321.07,247.35 A4.90,4.90 0 1 1 315.33,239.60 Z" fill="none" stroke="#1400e6" stroke-width="0.9" stroke-dasharray="1 2.2"/>
<path d="M320.95,248.66 A5.80,5.80 0 0 1 314.05,239.34" fill="none" stroke="#00e060" stroke-width="1.9"/>
<path d="M321.55,249.46 A6.80,6.80 0 0 1 313.45,238.54" fill="none" stroke="#1400e6" stroke-width="0.8" stroke-dasharray="1 1.3"/>
<path d="M320.39,247.90 A4.85,4.85 0 0 1 314.61,240.10" fill="none" stroke="#1400e6" stroke-width="0.7" stroke-dasharray="1 1.6"/>
<path d="M289.30,371.20 L276.55,343.55 A4.90,4.90 0 1 1 285.87,340.95 Z" fill="#ff0044" stroke="#ff0044" stroke-width="0.9"/>
<path d="M289.30,371.20 L276.55,343.55 A4.90,4.90 0 1 1 285.87,340.95 Z" fill="none" stroke="#1400e6" stroke-width="0.9" stroke-dasharray="1 2.2"/>
<path d="M275.41,343.06 A5.80,5.80 0 0 1 286.59,339.94" fill="none" stroke="#00e060" stroke-width="1.9"/>
<path d="M274.45,343.33 A6.80,6.80 0 0 1 287.55,339.67" fill="none" stroke="#1400e6" stroke-width="0.8" stroke-dasharray="1 1.3"/>
<path d="M276.33,342.81 A4.85,4.85 0 0 1 285.67,340.19" fill="none" stroke="#1400e6" stroke-width="0.7" stroke-dasharray="1 1.6"/>
<path d="M333.00,250.00 L320.32,262.16 A4.80,4.80 0 1 1 315.90,254.03 Z" fill="#ff0044" stroke="#ff0044" stroke-width="0.9"/>
<path d="M333.00,250.00 L320.32,262.16 A4.80,4.80 0 1 1 315.90,254.03 Z" fill="none" stroke="#1400e6" stroke-width="0.9" stroke-dasharray="1 2.2"/>
<path d="M319.72,263.71 A5.70,5.70 0 0 1 314.28,253.69" fill="none" stroke="#00e060" stroke-width="1.9"/>
<path d="M320.20,264.59 A6.70,6.70 0 0 1 313.80,252.81" fill="none" stroke="#1400e6" stroke-width="0.8" stroke-dasharray="1 1.3"/>
<path d="M319.27,262.87 A4.75,4.75 0 0 1 314.73,254.53" fill="none" stroke="#1400e6" stroke-width="0.7" stroke-dasharray="1 1.6"/>
<path d="M258.50,375.50 L253.95,345.72 A4.80,4.80 0 1 1 263.44,345.79 Z" fill="#ff0044" stroke="#ff0044" stroke-width="0.9"/>
<path d="M258.50,375.50 L253.95,345.72 A4.80,4.80 0 1 1 263.44,345.79 Z" fill="none" stroke="#1400e6" stroke-width="0.9" stroke-dasharray="1 2.2"/>
<path d="M253.00,344.96 A5.70,5.70 0 0 1 264.40,345.04" fill="none" stroke="#00e060" stroke-width="1.9"/>
<path d="M252.00,344.96 A6.70,6.70 0 0 1 265.40,345.04" fill="none" stroke="#1400e6" stroke-width="0.8" stroke-dasharray="1 1.3"/>
<path d="M253.95,344.97 A4.75,4.75 0 0 1 263.45,345.03" fill="none" stroke="#1400e6" stroke-width="0.7" stroke-dasharray="1 1.6"/>
<path d="M172.40,253.60 L192.42,253.70 A4.80,4.80 0 1 1 190.20,262.77 Z" fill="#ff0044" stroke="#ff0044" stroke-width="0.9"/>
<path d="M172.40,253.60 L192.42,253.70 A4.80,4.80 0 1 1 190.20,262.77 Z" fill="none" stroke="#1400e6" stroke-width="0.9" stroke-dasharray="1 2.2"/>
<path d="M193.76,252.96 A5.70,5.70 0 0 1 191.04,264.04" fill="none" stroke="#00e060" stroke-width="1.9"/>
<path d="M193.99,251.99 A6.70,6.70 0 0 1 190.81,265.01" fill="none" stroke="#1400e6" stroke-width="0.8" stroke-dasharray="1 1.3"/>
<path d="M193.53,253.89 A4.75,4.75 0 0 1 191.27,263.11" fill="none" stroke="#1400e6" stroke-width="0.7" stroke-dasharray="1 1.6"/>
<path d="M296.50,204.60 L289.76,224.88 A4.70,4.70 0 1 1 281.87,220.18 Z" fill="#ff0044" stroke="#ff0044" stroke-width="0.9"/>
<path d="M296.50,204.60 L289.76,224.88 A4.70,4.70 0 1 1 281.87,220.18 Z" fill="none" stroke="#1400e6" stroke-width="0.9" stroke-dasharray="1 2.2"/>
<path d="M290.11,226.27 A5.60,5.60 0 0 1 280.49,220.53" fill="none" stroke="#00e060" stroke-width="1.9"/>
<path d="M290.97,226.78 A6.60,6.60 0 0 1 279.63,220.02" fill="none" stroke="#1400e6" stroke-width="0.8" stroke-dasharray="1 1.3"/>
<path d="M289.29,225.78 A4.65,4.65 0 0 1 281.31,221.02" fill="none" stroke="#1400e6" stroke-width="0.7" stroke-dasharray="1 1.6"/>
<path d="M323.70,334.70 L304.77,323.91 A4.50,4.50 0 1 1 310.60,317.29 Z" fill="#ff0044" stroke="#ff0044" stroke-width="0.9"/>
<path d="M323.70,334.70 L304.77,323.91 A4.50,4.50 0 1 1 310.60,317.29 Z" fill="none" stroke="#1400e6" stroke-width="0.9" stroke-dasharray="1 2.2"/>
<path d="M303.43,324.05 A5.40,5.40 0 0 1 310.57,315.95" fill="none" stroke="#00e060" stroke-width="1.9"/>
<path d="M302.77,324.80 A6.40,6.40 0 0 1 311.23,315.20" fill="none" stroke="#1400e6" stroke-width="0.8" stroke-dasharray="1 1.3"/>
<path d="M304.06,323.34 A4.45,4.45 0 0 1 309.94,316.66" fill="none" stroke="#1400e6" stroke-width="0.7" stroke-dasharray="1 1.6"/>
<path d="M318.00,356.00 L299.23,336.09 A4.50,4.50 0 1 1 306.59,331.12 Z" fill="#ff0044" stroke="#ff0044" stroke-width="0.9"/>
<path d="M318.00,356.00 L299.23,336.09 A4.50,4.50 0 1 1 306.59,331.12 Z" fill="none" stroke="#1400e6" stroke-width="0.9" stroke-dasharray="1 2.2"/>
<path d="M298.02,336.02 A5.40,5.40 0 0 1 306.98,329.98" fill="none" stroke="#00e060" stroke-width="1.9"/>
<path d="M297.19,336.58 A6.40,6.40 0 0 1 307.81,329.42" fill="none" stroke="#1400e6" stroke-width="0.8" stroke-dasharray="1 1.3"/>
<path d="M298.81,335.49 A4.45,4.45 0 0 1 306.19,330.51" fill="none" stroke="#1400e6" stroke-width="0.7" stroke-dasharray="1 1.6"/>
<path d="M271.80,364.40 L264.97,340.22 A4.50,4.50 0 1 1 273.79,339.36 Z" fill="#ff0044" stroke="#ff0044" stroke-width="0.9"/>
<path d="M271.80,364.40 L264.97,340.22 A4.50,4.50 0 1 1 273.79,339.36 Z" fill="none" stroke="#1400e6" stroke-width="0.9" stroke-dasharray="1 2.2"/>
<path d="M263.93,339.53 A5.40,5.40 0 0 1 274.67,338.47" fill="none" stroke="#00e060" stroke-width="1.9"/>
<path d="M262.93,339.63 A6.40,6.40 0 0 1 275.67,338.37" fill="none" stroke="#1400e6" stroke-width="0.8" stroke-dasharray="1 1.3"/>
<path d="M264.87,339.44 A4.45,4.45 0 0 1 273.73,338.56" fill="none" stroke="#1400e6" stroke-width="0.7" stroke-dasharray="1 1.6"/>
<path d="M244.40,363.70 L243.50,339.16 A4.50,4.50 0 1 1 252.26,340.44 Z" fill="#ff0044" stroke="#ff0044" stroke-width="0.9"/>
<path d="M244.40,363.70 L243.50,339.16 A4.50,4.50 0 1 1 252.26,340.44 Z" fill="none" stroke="#1400e6" stroke-width="0.9" stroke-dasharray="1 2.2"/>
<path d="M242.66,338.22 A5.40,5.40 0 0 1 253.34,339.78" fill="none" stroke="#00e060" stroke-width="1.9"/>
<path d="M241.67,338.08 A6.40,6.40 0 0 1 254.33,339.92" fill="none" stroke="#1400e6" stroke-width="0.8" stroke-dasharray="1 1.3"/>
<path d="M243.60,338.36 A4.45,4.45 0 0 1 252.40,339.64" fill="none" stroke="#1400e6" stroke-width="0.7" stroke-dasharray="1 1.6"/>
<path d="M229.20,373.20 L230.00,340.89 A4.50,4.50 0 1 1 238.80,342.34 Z" fill="#ff0044" stroke="#ff0044" stroke-width="0.9"/>
<path d="M229.20,373.20 L230.00,340.89 A4.50,4.50 0 1 1 238.80,342.34 Z" fill="none" stroke="#1400e6" stroke-width="0.9" stroke-dasharray="1 2.2"/>
<path d="M229.17,340.12 A5.40,5.40 0 0 1 239.83,341.88" fill="none" stroke="#00e060" stroke-width="1.9"/>
<path d="M228.18,339.96 A6.40,6.40 0 0 1 240.82,342.04" fill="none" stroke="#1400e6" stroke-width="0.8" stroke-dasharray="1 1.3"/>
<path d="M230.11,340.28 A4.45,4.45 0 0 1 238.89,341.72" fill="none" stroke="#1400e6" stroke-width="0.7" stroke-dasharray="1 1.6"/>
<path d="M220.70,356.30 L223.84,333.39 A4.50,4.50 0 1 1 232.20,336.24 Z" fill="#ff0044" stroke="#ff0044" stroke-width="0.9"/>
<path d="M220.70,356.30 L223.84,333.39 A4.50,4.50 0 1 1 232.20,336.24 Z" fill="none" stroke="#1400e6" stroke-width="0.9" stroke-dasharray="1 2.2"/>
<path d="M223.19,332.26 A5.40,5.40 0 0 1 233.41,335.74" fill="none" stroke="#00e060" stroke-width="1.9"/>
<path d="M222.24,331.94 A6.40,6.40 0 0 1 234.36,336.06" fill="none" stroke="#1400e6" stroke-width="0.8" stroke-dasharray="1 1.3"/>
<path d="M224.09,332.56 A4.45,4.45 0 0 1 232.51,335.44" fill="none" stroke="#1400e6" stroke-width="0.7" stroke-dasharray="1 1.6"/>
<path d="M197.80,360.50 L205.19,335.71 A4.50,4.50 0 1 1 213.12,339.67 Z" fill="#ff0044" stroke="#ff0044" stroke-width="0.9"/>
<path d="M197.80,360.50 L205.19,335.71 A4.50,4.50 0 1 1 213.12,339.67 Z" fill="none" stroke="#1400e6" stroke-width="0.9" stroke-dasharray="1 2.2"/>
<path d="M204.67,334.59 A5.40,5.40 0 0 1 214.33,339.41" fill="none" stroke="#00e060" stroke-width="1.9"/>
<path d="M203.77,334.15 A6.40,6.40 0 0 1 215.23,339.85" fill="none" stroke="#1400e6" stroke-width="0.8" stroke-dasharray="1 1.3"/>
<path d="M205.52,335.02 A4.45,4.45 0 0 1 213.48,338.98" fill="none" stroke="#1400e6" stroke-width="0.7" stroke-dasharray="1 1.6"/>
<path d="M206.00,203.60 L221.41,220.10 A4.40,4.40 0 1 1 214.09,224.68 Z" fill="#ff0044" stroke="#ff0044" stroke-width="0.9"/>
<path d="M206.00,203.60 L221.41,220.10 A4.40,4.40 0 1 1 214.09,224.68 Z" fill="none" stroke="#1400e6" stroke-width="0.9" stroke-dasharray="1 2.2"/>
<path d="M222.69,220.29 A5.30,5.30 0 0 1 213.71,225.91" fill="none" stroke="#00e060" stroke-width="1.9"/>
<path d="M223.54,219.76 A6.30,6.30 0 0 1 212.86,226.44" fill="none" stroke="#1400e6" stroke-width="0.8" stroke-dasharray="1 1.3"/>
<path d="M221.89,220.79 A4.35,4.35 0 0 1 214.51,225.41" fill="none" stroke="#1400e6" stroke-width="0.7" stroke-dasharray="1 1.6"/>
<path d="M194.90,341.20 L204.71,320.69 A4.20,4.20 0 1 1 211.39,325.55 Z" fill="#ff0044" stroke="#ff0044" stroke-width="0.9"/>
<path d="M194.90,341.20 L204.71,320.69 A4.20,4.20 0 1 1 211.39,325.55 Z" fill="none" stroke="#1400e6" stroke-width="0.9" stroke-dasharray="1 2.2"/>
<path d="M204.38,319.50 A5.10,5.10 0 0 1 212.62,325.50" fill="none" stroke="#00e060" stroke-width="1.9"/>
<path d="M203.57,318.91 A6.10,6.10 0 0 1 213.43,326.09" fill="none" stroke="#1400e6" stroke-width="0.8" stroke-dasharray="1 1.3"/>
<path d="M205.14,320.06 A4.15,4.15 0 0 1 211.86,324.94" fill="none" stroke="#1400e6" stroke-width="0.7" stroke-dasharray="1 1.6"/>
<path d="M185.40,225.40 L203.30,234.43 A4.00,4.00 0 1 1 198.47,240.61 Z" fill="#ff0044" stroke="#ff0044" stroke-width="0.9"/>
<path d="M185.40,225.40 L203.30,234.43 A4.00,4.00 0 1 1 198.47,240.61 Z" fill="none" stroke="#1400e6" stroke-width="0.9" stroke-dasharray="1 2.2"/>
<path d="M204.52,234.14 A4.90,4.90 0 0 1 198.48,241.86" fill="none" stroke="#00e060" stroke-width="1.9"/>
<path d="M205.14,233.35 A5.90,5.90 0 0 1 197.86,242.65" fill="none" stroke="#1400e6" stroke-width="0.8" stroke-dasharray="1 1.3"/>
<path d="M203.93,234.89 A3.95,3.95 0 0 1 199.07,241.11" fill="none" stroke="#1400e6" stroke-width="0.7" stroke-dasharray="1 1.6"/>
<path d="M319.20,225.40 L305.52,241.13 A4.00,4.00 0 1 1 300.67,234.94 Z" fill="#ff0044" stroke="#ff0044" stroke-width="0.9"/>
<path d="M319.20,225.40 L305.52,241.13 A4.00,4.00 0 1 1 300.67,234.94 Z" fill="none" stroke="#1400e6" stroke-width="0.9" stroke-dasharray="1 2.2"/>
<path d="M305.52,242.36 A4.90,4.90 0 0 1 299.48,234.64" fill="none" stroke="#00e060" stroke-width="1.9"/>
<path d="M306.14,243.14 A5.90,5.90 0 0 1 298.86,233.86" fill="none" stroke="#1400e6" stroke-width="0.8" stroke-dasharray="1 1.3"/>
<path d="M304.94,241.61 A3.95,3.95 0 0 1 300.06,235.39" fill="none" stroke="#1400e6" stroke-width="0.7" stroke-dasharray="1 1.6"/>
<path d="M300.00,355.40 L286.17,334.72 A4.00,4.00 0 1 1 293.35,331.43 Z" fill="#ff0044" stroke="#ff0044" stroke-width="0.9"/>
<path d="M300.00,355.40 L286.17,334.72 A4.00,4.00 0 1 1 293.35,331.43 Z" fill="none" stroke="#1400e6" stroke-width="0.9" stroke-dasharray="1 2.2"/>
<path d="M285.05,334.54 A4.90,4.90 0 0 1 293.95,330.46" fill="none" stroke="#00e060" stroke-width="1.9"/>
<path d="M284.14,334.96 A5.90,5.90 0 0 1 294.86,330.04" fill="none" stroke="#1400e6" stroke-width="0.8" stroke-dasharray="1 1.3"/>
<path d="M285.91,334.15 A3.95,3.95 0 0 1 293.09,330.85" fill="none" stroke="#1400e6" stroke-width="0.7" stroke-dasharray="1 1.6"/>
<path d="M325.40,267.50 L313.37,274.31 A3.80,3.80 0 1 1 311.58,267.20 Z" fill="#ff0044" stroke="#ff0044" stroke-width="0.9"/>
<path d="M325.40,267.50 L313.37,274.31 A3.80,3.80 0 1 1 311.58,267.20 Z" fill="none" stroke="#1400e6" stroke-width="0.9" stroke-dasharray="1 2.2"/>
<path d="M312.65,275.56 A4.70,4.70 0 0 1 310.35,266.44" fill="none" stroke="#00e060" stroke-width="1.9"/>
<path d="M312.89,276.53 A5.70,5.70 0 0 1 310.11,265.47" fill="none" stroke="#1400e6" stroke-width="0.8" stroke-dasharray="1 1.3"/>
<path d="M312.42,274.64 A3.75,3.75 0 0 1 310.58,267.36" fill="none" stroke="#1400e6" stroke-width="0.7" stroke-dasharray="1 1.6"/>
<path d="M327.00,291.70 L312.94,293.47 A3.50,3.50 0 1 1 313.73,286.72 Z" fill="#ff0044" stroke="#ff0044" stroke-width="0.9"/>
<path d="M327.00,291.70 L312.94,293.47 A3.50,3.50 0 1 1 313.73,286.72 Z" fill="none" stroke="#1400e6" stroke-width="0.9" stroke-dasharray="1 2.2"/>
<path d="M311.99,294.37 A4.40,4.40 0 0 1 313.01,285.63" fill="none" stroke="#00e060" stroke-width="1.9"/>
<path d="M311.87,295.36 A5.40,5.40 0 0 1 313.13,284.64" fill="none" stroke="#1400e6" stroke-width="0.8" stroke-dasharray="1 1.3"/>
<path d="M312.10,293.43 A3.45,3.45 0 0 1 312.90,286.57" fill="none" stroke="#1400e6" stroke-width="0.7" stroke-dasharray="1 1.6"/>
<path d="M282.00,340.70 L274.18,330.07 A3.50,3.50 0 1 1 280.48,327.60 Z" fill="#ff0044" stroke="#ff0044" stroke-width="0.9"/>
<path d="M282.00,340.70 L274.18,330.07 A3.50,3.50 0 1 1 280.48,327.60 Z" fill="none" stroke="#1400e6" stroke-width="0.9" stroke-dasharray="1 2.2"/>
<path d="M272.91,329.61 A4.40,4.40 0 0 1 281.09,326.39" fill="none" stroke="#00e060" stroke-width="1.9"/>
<path d="M271.98,329.98 A5.40,5.40 0 0 1 282.02,326.02" fill="none" stroke="#1400e6" stroke-width="0.8" stroke-dasharray="1 1.3"/>
<path d="M273.79,329.26 A3.45,3.45 0 0 1 280.21,326.74" fill="none" stroke="#1400e6" stroke-width="0.7" stroke-dasharray="1 1.6"/>
<path d="M259.60,347.30 L255.45,333.72 A3.50,3.50 0 1 1 262.24,333.35 Z" fill="#ff0044" stroke="#ff0044" stroke-width="0.9"/>
<path d="M259.60,347.30 L255.45,333.72 A3.50,3.50 0 1 1 262.24,333.35 Z" fill="none" stroke="#1400e6" stroke-width="0.9" stroke-dasharray="1 2.2"/>
<path d="M254.41,332.94 A4.40,4.40 0 0 1 263.19,332.46" fill="none" stroke="#00e060" stroke-width="1.9"/>
<path d="M253.41,333.00 A5.40,5.40 0 0 1 264.19,332.40" fill="none" stroke="#1400e6" stroke-width="0.8" stroke-dasharray="1 1.3"/>
<path d="M255.36,332.89 A3.45,3.45 0 0 1 262.24,332.51" fill="none" stroke="#1400e6" stroke-width="0.7" stroke-dasharray="1 1.6"/>
<path d="M185.50,267.40 L200.02,267.90 A3.50,3.50 0 1 1 198.20,274.46 Z" fill="#ff0044" stroke="#ff0044" stroke-width="0.9"/>
<path d="M185.50,267.40 L200.02,267.90 A3.50,3.50 0 1 1 198.20,274.46 Z" fill="none" stroke="#1400e6" stroke-width="0.9" stroke-dasharray="1 2.2"/>
<path d="M201.08,267.16 A4.40,4.40 0 0 1 198.72,275.64" fill="none" stroke="#00e060" stroke-width="1.9"/>
<path d="M201.35,266.20 A5.40,5.40 0 0 1 198.45,276.60" fill="none" stroke="#1400e6" stroke-width="0.8" stroke-dasharray="1 1.3"/>
<path d="M200.82,268.08 A3.45,3.45 0 0 1 198.98,274.72" fill="none" stroke="#1400e6" stroke-width="0.7" stroke-dasharray="1 1.6"/>
<path d="M318.20,315.20 L305.74,310.05 A3.30,3.30 0 1 1 309.53,304.88 Z" fill="#ff0044" stroke="#ff0044" stroke-width="0.9"/>
<path d="M318.20,315.20 L305.74,310.05 A3.30,3.30 0 1 1 309.53,304.88 Z" fill="none" stroke="#1400e6" stroke-width="0.9" stroke-dasharray="1 2.2"/>
<path d="M304.52,310.39 A4.20,4.20 0 0 1 309.48,303.61" fill="none" stroke="#00e060" stroke-width="1.9"/>
<path d="M303.93,311.20 A5.20,5.20 0 0 1 310.07,302.80" fill="none" stroke="#1400e6" stroke-width="0.8" stroke-dasharray="1 1.3"/>
<path d="M305.08,309.62 A3.25,3.25 0 0 1 308.92,304.38" fill="none" stroke="#1400e6" stroke-width="0.7" stroke-dasharray="1 1.6"/>
<path d="M197.10,315.90 L207.34,307.01 A3.30,3.30 0 1 1 210.28,312.71 Z" fill="#ff0044" stroke="#ff0044" stroke-width="0.9"/>
<path d="M197.10,315.90 L207.34,307.01 A3.30,3.30 0 1 1 210.28,312.71 Z" fill="none" stroke="#1400e6" stroke-width="0.9" stroke-dasharray="1 2.2"/>
<path d="M207.57,305.77 A4.20,4.20 0 0 1 211.43,313.23" fill="none" stroke="#00e060" stroke-width="1.9"/>
<path d="M207.12,304.88 A5.20,5.20 0 0 1 211.88,314.12" fill="none" stroke="#1400e6" stroke-width="0.8" stroke-dasharray="1 1.3"/>
<path d="M208.01,306.61 A3.25,3.25 0 0 1 210.99,312.39" fill="none" stroke="#1400e6" stroke-width="0.7" stroke-dasharray="1 1.6"/>
<path d="M187.50,291.80 L199.42,287.22 A3.30,3.30 0 1 1 200.14,293.57 Z" fill="#ff0044" stroke="#ff0044" stroke-width="0.9"/>
<path d="M187.50,291.80 L199.42,287.22 A3.30,3.30 0 1 1 200.14,293.57 Z" fill="none" stroke="#1400e6" stroke-width="0.9" stroke-dasharray="1 2.2"/>
<path d="M200.12,286.13 A4.20,4.20 0 0 1 201.08,294.47" fill="none" stroke="#00e060" stroke-width="1.9"/>
<path d="M200.01,285.13 A5.20,5.20 0 0 1 201.19,295.47" fill="none" stroke="#1400e6" stroke-width="0.8" stroke-dasharray="1 1.3"/>
<path d="M200.23,287.07 A3.25,3.25 0 0 1 200.97,293.53" fill="none" stroke="#1400e6" stroke-width="0.7" stroke-dasharray="1 1.6"/>
<path d="M300.60,332.30 L291.05,321.49 A3.00,3.00 0 1 1 296.15,318.58 Z" fill="#ff0044" stroke="#ff0044" stroke-width="0.9"/>
<path d="M300.60,332.30 L291.05,321.49 A3.00,3.00 0 1 1 296.15,318.58 Z" fill="none" stroke="#1400e6" stroke-width="0.9" stroke-dasharray="1 2.2"/>
<path d="M289.91,321.43 A3.90,3.90 0 0 1 296.69,317.57" fill="none" stroke="#00e060" stroke-width="1.9"/>
<path d="M289.04,321.93 A4.90,4.90 0 0 1 297.56,317.07" fill="none" stroke="#1400e6" stroke-width="0.8" stroke-dasharray="1 1.3"/>
<path d="M290.74,320.96 A2.95,2.95 0 0 1 295.86,318.04" fill="none" stroke="#1400e6" stroke-width="0.7" stroke-dasharray="1 1.6"/>
<path d="M215.00,332.00 L219.69,319.45 A3.00,3.00 0 1 1 224.59,322.65 Z" fill="#ff0044" stroke="#ff0044" stroke-width="0.9"/>
<path d="M215.00,332.00 L219.69,319.45 A3.00,3.00 0 1 1 224.59,322.65 Z" fill="none" stroke="#1400e6" stroke-width="0.9" stroke-dasharray="1 2.2"/>
<path d="M219.23,318.37 A3.90,3.90 0 0 1 225.77,322.63" fill="none" stroke="#00e060" stroke-width="1.9"/>
<path d="M218.40,317.82 A4.90,4.90 0 0 1 226.60,323.18" fill="none" stroke="#1400e6" stroke-width="0.8" stroke-dasharray="1 1.3"/>
<path d="M220.03,318.89 A2.95,2.95 0 0 1 224.97,322.11" fill="none" stroke="#1400e6" stroke-width="0.7" stroke-dasharray="1 1.6"/>
<path d="M236.50,344.50 L236.70,331.46 A2.80,2.80 0 1 1 242.04,332.69 Z" fill="#ff0044" stroke="#ff0044" stroke-width="0.9"/>
<path d="M236.50,344.50 L236.70,331.46 A2.80,2.80 0 1 1 242.04,332.69 Z" fill="none" stroke="#1400e6" stroke-width="0.9" stroke-dasharray="1 2.2"/>
<path d="M235.89,330.67 A3.70,3.70 0 0 1 243.11,332.33" fill="none" stroke="#00e060" stroke-width="1.9"/>
<path d="M234.92,330.44 A4.70,4.70 0 0 1 244.08,332.56" fill="none" stroke="#1400e6" stroke-width="0.8" stroke-dasharray="1 1.3"/>
<path d="M236.82,330.88 A2.75,2.75 0 0 1 242.18,332.12" fill="none" stroke="#1400e6" stroke-width="0.7" stroke-dasharray="1 1.6"/>
</svg>
</body></html>
